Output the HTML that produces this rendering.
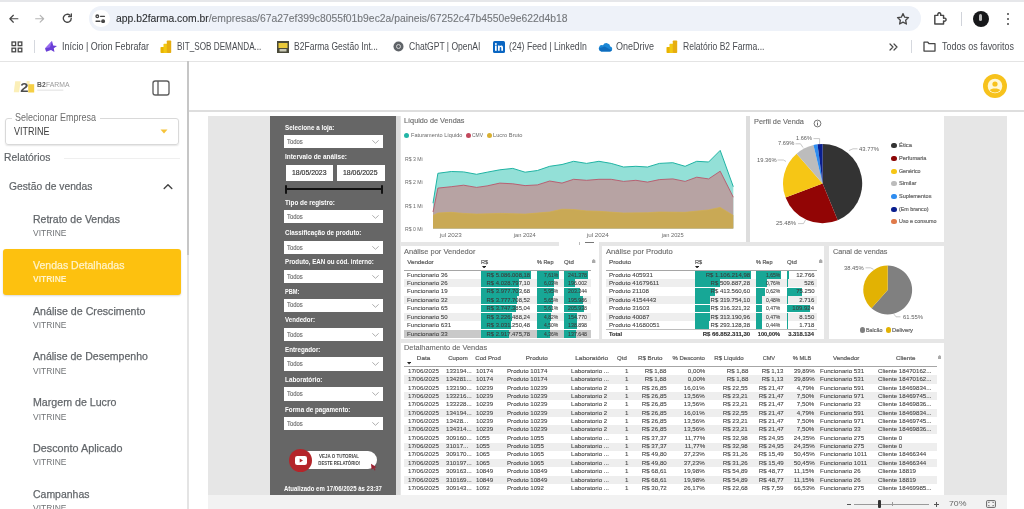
<!DOCTYPE html>
<html><head><meta charset="utf-8">
<style>
*{box-sizing:border-box;margin:0;padding:0}
html,body{width:1024px;height:509px;overflow:hidden;background:#fff;font-family:"Liberation Sans",sans-serif;}
.a{position:absolute;white-space:nowrap;line-height:1}
#root{position:absolute;left:0;top:0;width:1024px;height:509px;overflow:hidden;background:#fff}
#root>*{filter:blur(.45px)}
</style></head><body><div id="root">
<!-- chrome -->
<div class="a" style="left:0.00px;top:-1.00px;width:1024.00px;height:2.60px;background:#e6e7ea;"></div>
<div class="a" style="left:89.00px;top:6.30px;width:832.00px;height:24.40px;background:#eef2f9;border-radius:12.2px;"></div>

<svg class="a" style="left:8.2px;top:13.1px" width="11.5" height="11.5" viewBox="0 0 14 14" fill="none" stroke="#474747" stroke-width="1.5" stroke-linecap="round" stroke-linejoin="round"><path d="M12 7H2.5M6.5 2.8L2.3 7l4.2 4.2"/></svg>
<svg class="a" style="left:34.3px;top:13.1px" width="11.5" height="11.5" viewBox="0 0 14 14" fill="none" stroke="#b5b5b5" stroke-width="1.4" stroke-linecap="round" stroke-linejoin="round"><path d="M2 7h9.5M7.5 2.8L11.7 7l-4.2 4.2"/></svg>
<svg class="a" style="left:61.3px;top:12.4px" width="12.6" height="12.6" viewBox="0 0 15 15" fill="none" stroke="#474747" stroke-width="1.6" stroke-linecap="round" stroke-linejoin="round"><path d="M12.2 7.6a4.7 4.7 0 1 1-1.5-3.6"/><path d="M12.3 2.3v3.3H9" /></svg>
<div class="a" style="left:92px;top:9.6px;width:17.6px;height:17.8px;border-radius:9px;background:#fff"></div>
<svg class="a" style="left:95.3px;top:13.8px" width="10.6" height="9.7" viewBox="0 0 12 11" fill="none" stroke="#474747" stroke-width="1.5" stroke-linecap="round"><circle cx="2.6" cy="2.6" r="1.5"/><path d="M6.3 2.6h4.4"/><circle cx="9.2" cy="8.2" r="1.5" fill="#474747"/><path d="M1.2 8.2h4.4"/></svg>

<div class="a" style="top:13.26px;font-size:11.40px;color:#74777b;left:115.60px;transform:scaleX(0.9096);transform-origin:0 0;-webkit-text-stroke:.12px #74777b;"><span style="color:#2e3033;-webkit-text-stroke:.12px #2e3033">app.b2farma.com.br</span>/empresas/67a27ef399c8055f01b9ec2a/paineis/67252c47b4550e9e622d4b18</div>

<svg class="a" style="left:896px;top:12px" width="14" height="14" viewBox="0 0 14 14" fill="none" stroke="#474747" stroke-width="1.3" stroke-linejoin="round"><path d="M7 1.6l1.65 3.55 3.85.45-2.85 2.65.75 3.8L7 10.15 3.6 12.05l.75-3.8L1.5 5.6l3.85-.45z"/></svg>
<svg class="a" style="left:933px;top:11px" width="15" height="15" viewBox="0 0 15 15" fill="none" stroke="#474747" stroke-width="1.5" stroke-linejoin="round"><path d="M2.5 4.3h3.2c-.5-1.6.3-2.6 1.4-2.6s1.9 1 1.4 2.6h3v3c1.6-.5 2.6.3 2.6 1.4s-1 1.9-2.6 1.4v3.2h-9z" transform="translate(-0.6,0.2) scale(0.97)"/></svg>
<div class="a" style="left:960.5px;top:12px;width:1px;height:14px;background:#d0d3da"></div>
<div class="a" style="left:972.5px;top:11px;width:16px;height:16px;border-radius:8px;background:#17181a"></div>
<div class="a" style="left:979px;top:14px;width:3px;height:7px;border-radius:1.5px;background:#d8d8d8;opacity:.85"></div>
<div class="a" style="left:1006.5px;top:12.5px;width:2.6px;height:2.6px;border-radius:2px;background:#474747"></div>
<div class="a" style="left:1006.5px;top:17.7px;width:2.6px;height:2.6px;border-radius:2px;background:#474747"></div>
<div class="a" style="left:1006.5px;top:22.9px;width:2.6px;height:2.6px;border-radius:2px;background:#474747"></div>
<svg class="a" style="left:11px;top:41px" width="12" height="12" viewBox="0 0 12 12" fill="none" stroke="#474747" stroke-width="1.3"><rect x="1" y="1" width="3.6" height="3.6"/><rect x="7.2" y="1" width="3.6" height="3.6"/><rect x="1" y="7.2" width="3.6" height="3.6"/><rect x="7.2" y="7.2" width="3.6" height="3.6"/></svg>
<div class="a" style="left:33.5px;top:40px;width:1px;height:13px;background:#d5d8de"></div>
<svg class="a" style="left:44px;top:40px" width="14" height="13" viewBox="0 0 14 13"><path d="M1 8.5L8 1l1.2 4.4L13 6l-3.2 2.3.6 3.7L7 10l-4.8 1.8z" fill="#6a3fd6"/><path d="M1 8.5l5-1.2L8 1z" fill="#9b6df0"/></svg>
<svg class="a" style="left:160px;top:40px" width="12" height="13" viewBox="0 0 12 13"><rect x="0.5" y="7" width="4" height="6" rx=".8" fill="#e9b400"/><rect x="3.5" y="3.8" width="4" height="9.2" rx=".8" fill="#f2c811"/><rect x="6.8" y="0.5" width="4.4" height="12.5" rx=".8" fill="#e6ad10"/></svg>
<svg class="a" style="left:276.5px;top:40.5px" width="12" height="12" viewBox="0 0 12 12"><rect width="12" height="12" fill="#4a4a3a"/><rect x="1.5" y="2" width="9" height="5" fill="#e9c93a"/><rect x="2.5" y="8" width="7" height="2.5" fill="#c9c9b5"/></svg>
<svg class="a" style="left:392.5px;top:41px" width="11" height="11" viewBox="0 0 11 11"><circle cx="5.5" cy="5.5" r="5" fill="#5f6368"/><circle cx="5.5" cy="5.5" r="2" fill="none" stroke="#ddd" stroke-width=".9"/></svg>
<svg class="a" style="left:492.5px;top:40.5px" width="12" height="12" viewBox="0 0 12 12"><rect width="12" height="12" rx="1.5" fill="#0a66c2"/><rect x="2" y="4.6" width="1.7" height="5.2" fill="#fff"/><circle cx="2.85" cy="2.9" r="1" fill="#fff"/><path d="M5 4.6h1.6v.8c.9-1.4 3.4-1.2 3.4 1v3.4H8.3V6.9c0-1.2-1.6-1.1-1.6 0v2.9H5z" fill="#fff"/></svg>
<svg class="a" style="left:598px;top:42px" width="15" height="10" viewBox="0 0 15 10"><path d="M3.2 9.5h8.6a2.6 2.6 0 0 0 .5-5.1A3.9 3.9 0 0 0 5 3.2 3.2 3.2 0 0 0 3.2 9.5z" fill="#1b87d6"/><path d="M3.2 9.5h8.6a2.6 2.6 0 0 0 2-1L6.8 4.4 1.4 6.2A3.2 3.2 0 0 0 3.2 9.5z" fill="#0f6cbd"/></svg>
<svg class="a" style="left:666px;top:40px" width="12" height="13" viewBox="0 0 12 13"><rect x="0.5" y="7" width="4" height="6" rx=".8" fill="#e9b400"/><rect x="3.5" y="3.8" width="4" height="9.2" rx=".8" fill="#f2c811"/><rect x="6.8" y="0.5" width="4.4" height="12.5" rx=".8" fill="#e6ad10"/></svg>
<svg class="a" style="left:889px;top:43px" width="9" height="8" viewBox="0 0 9 8" fill="none" stroke="#474747" stroke-width="1.2" stroke-linecap="round" stroke-linejoin="round"><path d="M1 1l3 3-3 3M5 1l3 3-3 3"/></svg>
<div class="a" style="left:911px;top:40px;width:1px;height:13px;background:#d5d8de"></div>
<svg class="a" style="left:923px;top:41px" width="13" height="11" viewBox="0 0 13 11" fill="none" stroke="#474747" stroke-width="1.3" stroke-linejoin="round"><path d="M1 1.2h3.8l1.3 1.5H12v7.4H1z"/></svg>

<div class="a" style="top:41.99px;font-size:10.20px;color:#4a4d52;left:61.50px;transform:scaleX(0.8786);transform-origin:0 0;">Início | Orion Febrafar</div>
<div class="a" style="top:41.99px;font-size:10.20px;color:#4a4d52;left:177.00px;transform:scaleX(0.8015);transform-origin:0 0;">BIT_SOB DEMANDA...</div>
<div class="a" style="top:41.99px;font-size:10.20px;color:#4a4d52;left:293.50px;transform:scaleX(0.8371);transform-origin:0 0;">B2Farma Gestão Int...</div>
<div class="a" style="top:41.99px;font-size:10.20px;color:#4a4d52;left:408.50px;transform:scaleX(0.8388);transform-origin:0 0;">ChatGPT | OpenAI</div>
<div class="a" style="top:41.99px;font-size:10.20px;color:#4a4d52;left:509.00px;transform:scaleX(0.8562);transform-origin:0 0;">(24) Feed | LinkedIn</div>
<div class="a" style="top:41.99px;font-size:10.20px;color:#4a4d52;left:616.00px;transform:scaleX(0.8820);transform-origin:0 0;">OneDrive</div>
<div class="a" style="top:41.99px;font-size:10.20px;color:#4a4d52;left:682.50px;transform:scaleX(0.8407);transform-origin:0 0;">Relatório B2 Farma...</div>
<div class="a" style="top:41.99px;font-size:10.20px;color:#4a4d52;left:942.00px;transform:scaleX(0.8758);transform-origin:0 0;">Todos os favoritos</div>
<div class="a" style="left:0.00px;top:60.50px;width:1024.00px;height:1.00px;background:#e4e4e4;"></div>
<!-- sidebar -->

<svg class="a" style="left:13px;top:78px" width="60" height="17" viewBox="0 0 60 17">
<path d="M2.2 3.2h5.5l-1.6 11H0.8z" fill="#fbefb8"/>
<rect x="15.2" y="6.2" width="6" height="8.3" fill="#f5cf45"/>
<rect x="13.6" y="3" width="3" height="3" fill="#fbefb8"/>
<text x="7.3" y="14.2" font-family="Liberation Sans" font-weight="bold" font-size="13.5" fill="#4e4e4e" textLength="8.2" lengthAdjust="spacingAndGlyphs">2</text>
<text x="24.1" y="9.4" font-family="Liberation Sans" font-weight="bold" font-size="6.6" fill="#5a5a5a" textLength="8.6" lengthAdjust="spacingAndGlyphs">B2</text>
<text x="33" y="9.4" font-family="Liberation Sans" font-size="6.6" fill="#9a9a9a" textLength="23.5" lengthAdjust="spacingAndGlyphs">FARMA</text>
<rect x="24.3" y="11.6" width="26" height="1.1" fill="#e3e3e3"/>
</svg>
<svg class="a" style="left:151.8px;top:80.2px" width="18" height="16" viewBox="0 0 18 16" fill="none" stroke="#5e5e5e" stroke-width="1.35"><rect x="1" y="1" width="16" height="14" rx="2.2"/><path d="M6 1v14"/></svg>

<div class="a" style="left:5px;top:117.8px;width:173.5px;height:26.8px;border:1px solid #d9d9d9;border-radius:3px;box-shadow:0 1px 1.5px rgba(0,0,0,.10)"></div>
<div class="a" style="left:11.50px;top:116.00px;width:88.00px;height:5.00px;background:#fff;"></div>
<div class="a" style="top:113.04px;font-size:10.30px;color:#6e6e6e;left:15.30px;transform:scaleX(0.8733);transform-origin:0 0;">Selecionar Empresa</div>
<div class="a" style="top:126.54px;font-size:10.30px;color:#3c3c3c;left:13.50px;transform:scaleX(0.8737);transform-origin:0 0;">VITRINE</div>
<svg class="a" style="left:159.5px;top:129px" width="8" height="5" viewBox="0 0 8 5"><path d="M0.5 0.5h7L4 4.5z" fill="#f6c33a"/></svg>
<div class="a" style="top:151.45px;font-size:11.60px;color:#62666a;left:3.50px;transform:scaleX(0.8904);transform-origin:0 0;-webkit-text-stroke:.2px #595d61;">Relatórios</div>
<div class="a" style="left:64.00px;top:157.50px;width:115.50px;height:1.20px;background:#efefef;"></div>
<div class="a" style="top:180.05px;font-size:11.60px;color:#62666a;left:9.00px;transform:scaleX(0.8868);transform-origin:0 0;-webkit-text-stroke:.2px #595d61;">Gestão de vendas</div>
<svg class="a" style="left:162.5px;top:183px" width="10" height="7" viewBox="0 0 10 7" fill="none" stroke="#444" stroke-width="1.4" stroke-linecap="round" stroke-linejoin="round"><path d="M1.2 5.5L5 1.7l3.8 3.8"/></svg>
<div class="a" style="left:3.00px;top:249.00px;width:177.50px;height:46.00px;background:#fdc10f;border-radius:3px;box-shadow:0 1px 2px rgba(0,0,0,.15);"></div>
<div class="a" style="top:213.00px;font-size:11.70px;color:#62666a;left:33.20px;transform:scaleX(0.8976);transform-origin:0 0;-webkit-text-stroke:.25px #62666a;">Retrato de Vendas</div>
<div class="a" style="top:229.47px;font-size:9.30px;color:#707376;left:33.20px;transform:scaleX(0.9131);transform-origin:0 0;">VITRINE</div>
<div class="a" style="top:258.80px;font-size:11.70px;color:#fff3c9;left:33.20px;transform:scaleX(0.9016);transform-origin:0 0;-webkit-text-stroke:.25px #fff3c9;">Vendas Detalhadas</div>
<div class="a" style="top:275.27px;font-size:9.30px;color:#fff3c9;font-weight:bold;left:33.20px;transform:scaleX(0.9131);transform-origin:0 0;">VITRINE</div>
<div class="a" style="top:304.60px;font-size:11.70px;color:#62666a;left:33.20px;transform:scaleX(0.9105);transform-origin:0 0;-webkit-text-stroke:.25px #62666a;">Análise de Crescimento</div>
<div class="a" style="top:321.07px;font-size:9.30px;color:#707376;left:33.20px;transform:scaleX(0.9131);transform-origin:0 0;">VITRINE</div>
<div class="a" style="top:350.40px;font-size:11.70px;color:#62666a;left:33.20px;transform:scaleX(0.9021);transform-origin:0 0;-webkit-text-stroke:.25px #62666a;">Análise de Desempenho</div>
<div class="a" style="top:366.87px;font-size:9.30px;color:#707376;left:33.20px;transform:scaleX(0.9131);transform-origin:0 0;">VITRINE</div>
<div class="a" style="top:396.20px;font-size:11.70px;color:#62666a;left:33.20px;transform:scaleX(0.9106);transform-origin:0 0;-webkit-text-stroke:.25px #62666a;">Margem de Lucro</div>
<div class="a" style="top:412.67px;font-size:9.30px;color:#707376;left:33.20px;transform:scaleX(0.9131);transform-origin:0 0;">VITRINE</div>
<div class="a" style="top:442.00px;font-size:11.70px;color:#62666a;left:33.20px;transform:scaleX(0.9235);transform-origin:0 0;-webkit-text-stroke:.25px #62666a;">Desconto Aplicado</div>
<div class="a" style="top:458.47px;font-size:9.30px;color:#707376;left:33.20px;transform:scaleX(0.9131);transform-origin:0 0;">VITRINE</div>
<div class="a" style="top:487.80px;font-size:11.70px;color:#62666a;left:33.20px;transform:scaleX(0.8956);transform-origin:0 0;-webkit-text-stroke:.25px #62666a;">Campanhas</div>
<div class="a" style="top:504.27px;font-size:9.30px;color:#707376;left:33.20px;transform:scaleX(0.9131);transform-origin:0 0;">VITRINE</div>
<div class="a" style="left:186.60px;top:61.00px;width:2.80px;height:448.00px;background:#e4e4e4;"></div>
<div class="a" style="left:186.60px;top:61.00px;width:2.80px;height:194.00px;background:#c6c6c6;"></div>
<!-- mainarea -->
<div class="a" style="left:189.40px;top:109.50px;width:835.00px;height:2.50px;background:#dedede;"></div>
<div class="a" style="left:207.50px;top:116.00px;width:799.00px;height:379.00px;background:#e6e6e6;"></div>
<div class="a" style="left:207.50px;top:495.00px;width:799.00px;height:14.00px;background:#f2f2f2;"></div>
<div class="a" style="left:982.5px;top:74px;width:24px;height:24px;border-radius:12px;background:#f7c21c"></div>
<svg class="a" style="left:985.5px;top:77px" width="18" height="18" viewBox="0 0 18 18"><circle cx="9" cy="9" r="7.3" fill="#fff7d6"/><circle cx="9" cy="7" r="2.6" fill="#f7c21c"/><path d="M3.8 13.2c1-2.4 9.4-2.4 10.4 0a7 7 0 0 1-10.4 0z" fill="#f7c21c"/></svg>
<!-- filters -->
<div class="a" style="left:270.00px;top:116.00px;width:126.30px;height:378.50px;background:#666666;"></div>
<div class="a" style="left:396.30px;top:116.00px;width:4.20px;height:378.50px;background:#dcdcdc;"></div>
<div class="a" style="top:124.94px;font-size:6.90px;color:#ffffff;font-weight:bold;left:285.20px;transform:scaleX(0.9154);transform-origin:0 0;">Selecione a loja:</div>
<div class="a" style="left:284.00px;top:135.00px;width:99.30px;height:13.30px;background:#fff;"></div>
<div class="a" style="top:139.01px;font-size:6.30px;color:#707070;left:287.30px;transform:scaleX(0.9398);transform-origin:0 0;-webkit-text-stroke:.15px #707070;">Todos</div>
<svg class="a" style="left:372.00px;top:140.05px" width="7" height="4" viewBox="0 0 7 4" fill="none" stroke="#9a9a9a" stroke-width=".8" stroke-linecap="round" stroke-linejoin="round"><path d="M.6 .6L3.5 3.3 6.4 .6"/></svg>
<div class="a" style="top:154.44px;font-size:6.90px;color:#ffffff;font-weight:bold;left:285.20px;transform:scaleX(0.9345);transform-origin:0 0;">Intervalo de análise:</div>
<div class="a" style="left:286.00px;top:164.50px;width:47.20px;height:16.70px;background:#fff;"></div>
<div class="a" style="left:336.50px;top:164.50px;width:48.00px;height:16.70px;background:#fff;"></div>
<div class="a" style="top:169.33px;font-size:7.30px;color:#3a3a3a;left:291.33px;transform:scaleX(0.9443);transform-origin:50% 0;-webkit-text-stroke:.2px #3a3a3a;">18/05/2023</div>
<div class="a" style="top:169.33px;font-size:7.30px;color:#3a3a3a;left:342.23px;transform:scaleX(0.9443);transform-origin:50% 0;-webkit-text-stroke:.2px #3a3a3a;">18/06/2025</div>
<div class="a" style="left:285.60px;top:188.10px;width:96.40px;height:1.70px;background:#111;"></div>
<div class="a" style="left:285.00px;top:184.60px;width:2.20px;height:9.00px;background:#111;border-radius:1px;"></div>
<div class="a" style="left:380.60px;top:184.60px;width:2.20px;height:9.00px;background:#111;border-radius:1px;"></div>
<div class="a" style="top:199.94px;font-size:6.90px;color:#ffffff;font-weight:bold;left:285.20px;transform:scaleX(0.9206);transform-origin:0 0;">Tipo de registro:</div>
<div class="a" style="left:284.00px;top:210.00px;width:99.30px;height:13.30px;background:#fff;"></div>
<div class="a" style="top:214.01px;font-size:6.30px;color:#707070;left:287.30px;transform:scaleX(0.9398);transform-origin:0 0;-webkit-text-stroke:.15px #707070;">Todos</div>
<svg class="a" style="left:372.00px;top:215.05px" width="7" height="4" viewBox="0 0 7 4" fill="none" stroke="#9a9a9a" stroke-width=".8" stroke-linecap="round" stroke-linejoin="round"><path d="M.6 .6L3.5 3.3 6.4 .6"/></svg>
<div class="a" style="top:230.14px;font-size:6.90px;color:#ffffff;font-weight:bold;left:285.20px;transform:scaleX(0.9069);transform-origin:0 0;">Classificação de produto:</div>
<div class="a" style="left:284.00px;top:240.70px;width:99.30px;height:12.90px;background:#fff;"></div>
<div class="a" style="top:244.51px;font-size:6.30px;color:#707070;left:287.30px;transform:scaleX(0.9398);transform-origin:0 0;-webkit-text-stroke:.15px #707070;">Todos</div>
<svg class="a" style="left:372.00px;top:245.55px" width="7" height="4" viewBox="0 0 7 4" fill="none" stroke="#9a9a9a" stroke-width=".8" stroke-linecap="round" stroke-linejoin="round"><path d="M.6 .6L3.5 3.3 6.4 .6"/></svg>
<div class="a" style="top:258.94px;font-size:6.90px;color:#ffffff;font-weight:bold;left:285.20px;transform:scaleX(0.9000);transform-origin:0 0;">Produto, EAN ou cód. interno:</div>
<div class="a" style="left:284.00px;top:269.60px;width:99.30px;height:13.20px;background:#fff;"></div>
<div class="a" style="top:273.56px;font-size:6.30px;color:#707070;left:287.30px;transform:scaleX(0.9398);transform-origin:0 0;-webkit-text-stroke:.15px #707070;">Todos</div>
<svg class="a" style="left:372.00px;top:274.60px" width="7" height="4" viewBox="0 0 7 4" fill="none" stroke="#9a9a9a" stroke-width=".8" stroke-linecap="round" stroke-linejoin="round"><path d="M.6 .6L3.5 3.3 6.4 .6"/></svg>
<div class="a" style="top:288.54px;font-size:6.90px;color:#ffffff;font-weight:bold;left:285.20px;transform:scaleX(0.8224);transform-origin:0 0;">PBM:</div>
<div class="a" style="left:284.00px;top:298.60px;width:99.30px;height:13.00px;background:#fff;"></div>
<div class="a" style="top:302.46px;font-size:6.30px;color:#707070;left:287.30px;transform:scaleX(0.9398);transform-origin:0 0;-webkit-text-stroke:.15px #707070;">Todos</div>
<svg class="a" style="left:372.00px;top:303.50px" width="7" height="4" viewBox="0 0 7 4" fill="none" stroke="#9a9a9a" stroke-width=".8" stroke-linecap="round" stroke-linejoin="round"><path d="M.6 .6L3.5 3.3 6.4 .6"/></svg>
<div class="a" style="top:317.14px;font-size:6.90px;color:#ffffff;font-weight:bold;left:285.20px;transform:scaleX(0.8892);transform-origin:0 0;">Vendedor:</div>
<div class="a" style="left:284.00px;top:328.00px;width:99.30px;height:13.10px;background:#fff;"></div>
<div class="a" style="top:331.91px;font-size:6.30px;color:#707070;left:287.30px;transform:scaleX(0.9398);transform-origin:0 0;-webkit-text-stroke:.15px #707070;">Todos</div>
<svg class="a" style="left:372.00px;top:332.95px" width="7" height="4" viewBox="0 0 7 4" fill="none" stroke="#9a9a9a" stroke-width=".8" stroke-linecap="round" stroke-linejoin="round"><path d="M.6 .6L3.5 3.3 6.4 .6"/></svg>
<div class="a" style="top:346.74px;font-size:6.90px;color:#ffffff;font-weight:bold;left:285.20px;transform:scaleX(0.9078);transform-origin:0 0;">Entregador:</div>
<div class="a" style="left:284.00px;top:357.40px;width:99.30px;height:13.20px;background:#fff;"></div>
<div class="a" style="top:361.36px;font-size:6.30px;color:#707070;left:287.30px;transform:scaleX(0.9398);transform-origin:0 0;-webkit-text-stroke:.15px #707070;">Todos</div>
<svg class="a" style="left:372.00px;top:362.40px" width="7" height="4" viewBox="0 0 7 4" fill="none" stroke="#9a9a9a" stroke-width=".8" stroke-linecap="round" stroke-linejoin="round"><path d="M.6 .6L3.5 3.3 6.4 .6"/></svg>
<div class="a" style="top:376.74px;font-size:6.90px;color:#ffffff;font-weight:bold;left:285.20px;transform:scaleX(0.9229);transform-origin:0 0;">Laboratório:</div>
<div class="a" style="left:284.00px;top:387.40px;width:99.30px;height:13.20px;background:#fff;"></div>
<div class="a" style="top:391.36px;font-size:6.30px;color:#707070;left:287.30px;transform:scaleX(0.9398);transform-origin:0 0;-webkit-text-stroke:.15px #707070;">Todos</div>
<svg class="a" style="left:372.00px;top:392.40px" width="7" height="4" viewBox="0 0 7 4" fill="none" stroke="#9a9a9a" stroke-width=".8" stroke-linecap="round" stroke-linejoin="round"><path d="M.6 .6L3.5 3.3 6.4 .6"/></svg>
<div class="a" style="top:406.54px;font-size:6.90px;color:#ffffff;font-weight:bold;left:285.20px;transform:scaleX(0.9087);transform-origin:0 0;">Forma de pagamento:</div>
<div class="a" style="left:284.00px;top:416.90px;width:99.30px;height:13.00px;background:#fff;"></div>
<div class="a" style="top:420.76px;font-size:6.30px;color:#707070;left:287.30px;transform:scaleX(0.9398);transform-origin:0 0;-webkit-text-stroke:.15px #707070;">Todos</div>
<svg class="a" style="left:372.00px;top:421.80px" width="7" height="4" viewBox="0 0 7 4" fill="none" stroke="#9a9a9a" stroke-width=".8" stroke-linecap="round" stroke-linejoin="round"><path d="M.6 .6L3.5 3.3 6.4 .6"/></svg>
<div class="a" style="left:300.00px;top:451.30px;width:77.00px;height:17.50px;background:#fff;border-radius:9px;"></div>
<div class="a" style="left:288.7px;top:448.7px;width:23px;height:23px;border-radius:12px;background:#b4252a"></div>
<svg class="a" style="left:294.5px;top:456px" width="12" height="9" viewBox="0 0 12 9"><rect width="12" height="9" rx="2.2" fill="#fff"/><path d="M4.7 2.4L8 4.5 4.7 6.6z" fill="#b4252a"/></svg>
<div class="a" style="top:453.63px;font-size:5.60px;color:#444;font-weight:bold;left:314.25px;transform:scaleX(0.7985);transform-origin:50% 0;">VEJA O TUTORIAL</div>
<div class="a" style="top:460.93px;font-size:5.60px;color:#444;font-weight:bold;left:311.97px;transform:scaleX(0.7685);transform-origin:50% 0;">DESTE RELATÓRIO!</div>
<svg class="a" style="left:370px;top:463px" width="8" height="8" viewBox="0 0 8 8"><path d="M1 .8l5.6 3.4-2.4.5 1.4 2.4-1 .5L3.3 5.2 1.6 6.8z" fill="#9c2030"/></svg>
<div class="a" style="top:485.86px;font-size:6.30px;color:#fff;font-weight:bold;left:283.80px;transform:scaleX(0.9551);transform-origin:0 0;">Atualizado em 17/06/2025 às 23:37</div>
<!-- chart -->
<div class="a" style="left:400.50px;top:113.00px;width:345.50px;height:129.30px;background:#fff;"></div>
<div class="a" style="left:746.00px;top:116.00px;width:4.50px;height:126.30px;background:#dddddd;"></div>
<div class="a" style="top:117.12px;font-size:7.70px;color:#6a6a6a;left:403.80px;transform:scaleX(0.9483);transform-origin:0 0;-webkit-text-stroke:.12px #6a6a6a;">Líquido de Vendas</div>
<div class="a" style="left:404.10px;top:132.80px;width:5px;height:5px;border-radius:3px;background:#22b5a6"></div>
<div class="a" style="top:133.14px;font-size:5.40px;color:#6a6a6a;left:410.70px;transform:scaleX(1.0335);transform-origin:0 0;">Faturamento Líquido</div>
<div class="a" style="left:465.70px;top:132.80px;width:5px;height:5px;border-radius:3px;background:#c2485c"></div>
<div class="a" style="top:133.14px;font-size:5.40px;color:#6a6a6a;left:472.00px;transform:scaleX(0.9166);transform-origin:0 0;">CMV</div>
<div class="a" style="left:486.70px;top:132.80px;width:5px;height:5px;border-radius:3px;background:#d8b032"></div>
<div class="a" style="top:133.14px;font-size:5.40px;color:#6a6a6a;left:493.00px;transform:scaleX(1.0567);transform-origin:0 0;">Lucro Bruto</div>
<div class="a" style="top:156.54px;font-size:5.20px;color:#6a6a6a;left:404.60px;transform:scaleX(0.9935);transform-origin:0 0;">R$ 3 Mi</div>
<div class="a" style="top:179.94px;font-size:5.20px;color:#6a6a6a;left:404.60px;transform:scaleX(0.9935);transform-origin:0 0;">R$ 2 Mi</div>
<div class="a" style="top:203.54px;font-size:5.20px;color:#6a6a6a;left:404.60px;transform:scaleX(0.9935);transform-origin:0 0;">R$ 1 Mi</div>
<div class="a" style="top:227.14px;font-size:5.20px;color:#6a6a6a;left:404.60px;transform:scaleX(0.9935);transform-origin:0 0;">R$ 0 Mi</div>
<div class="a" style="top:232.63px;font-size:5.60px;color:#6a6a6a;left:441.19px;transform:scaleX(1.1215);transform-origin:50% 0;">jul 2023</div>
<div class="a" style="top:232.63px;font-size:5.60px;color:#6a6a6a;left:514.26px;transform:scaleX(1.0239);transform-origin:50% 0;">jan 2024</div>
<div class="a" style="top:232.63px;font-size:5.60px;color:#6a6a6a;left:588.49px;transform:scaleX(1.1215);transform-origin:50% 0;">jul 2024</div>
<div class="a" style="top:232.63px;font-size:5.60px;color:#6a6a6a;left:661.86px;transform:scaleX(1.0239);transform-origin:50% 0;">jan 2025</div>
<svg class="a" style="left:0;top:0" width="1024" height="509" viewBox="0 0 1024 509"><path d="M433.0 203.2 L437.9 173.3 L451.3 171.5 L463.6 171.9 L476.6 174.3 L487.1 172.2 L499.8 169.8 L512.8 168.4 L525.1 172.2 L537.4 170.5 L549.7 166.3 L562.0 164.5 L573.6 161.3 L586.6 163.4 L598.9 161.3 L611.2 163.4 L623.6 167.0 L635.9 166.3 L647.5 167.0 L659.4 163.4 L672.8 162.7 L685.1 166.3 L696.7 161.3 L708.6 162.0 L720.2 150.4 L733.3 186.7 L733.3 228.5 L433.0 228.5 Z" fill="#93e0d7"/><path d="M433.0 212.0 L437.9 188.1 L451.3 186.7 L463.6 185.2 L476.6 187.4 L487.1 185.9 L499.8 183.1 L512.8 183.8 L525.1 185.6 L537.4 184.9 L549.7 181.0 L562.0 183.1 L573.6 179.3 L586.6 180.3 L598.9 179.3 L611.2 179.3 L623.6 181.4 L635.9 180.3 L647.5 182.1 L659.4 179.6 L672.8 178.9 L685.1 181.4 L696.7 177.2 L708.6 178.9 L720.2 171.2 L733.3 197.2 L733.3 228.5 L433.0 228.5 Z" fill="#b7a3a3"/><path d="M433.0 215.5 L437.9 213.0 L451.3 212.3 L463.6 213.4 L476.6 214.1 L499.8 213.4 L525.1 214.1 L549.7 212.0 L562.0 209.2 L573.6 209.5 L586.6 210.9 L598.9 211.3 L623.6 213.0 L647.5 212.7 L659.4 212.0 L685.1 212.3 L708.6 209.9 L720.2 207.4 L733.3 215.5 L733.3 228.5 L433.0 228.5 Z" fill="#c9a955"/><path d="M433.0 203.2 L437.9 173.3 L451.3 171.5 L463.6 171.9 L476.6 174.3 L487.1 172.2 L499.8 169.8 L512.8 168.4 L525.1 172.2 L537.4 170.5 L549.7 166.3 L562.0 164.5 L573.6 161.3 L586.6 163.4 L598.9 161.3 L611.2 163.4 L623.6 167.0 L635.9 166.3 L647.5 167.0 L659.4 163.4 L672.8 162.7 L685.1 166.3 L696.7 161.3 L708.6 162.0 L720.2 150.4 L733.3 186.7" fill="none" stroke="#1fb3a3" stroke-width="1" stroke-linejoin="round"/><path d="M433.0 212.0 L437.9 188.1 L451.3 186.7 L463.6 185.2 L476.6 187.4 L487.1 185.9 L499.8 183.1 L512.8 183.8 L525.1 185.6 L537.4 184.9 L549.7 181.0 L562.0 183.1 L573.6 179.3 L586.6 180.3 L598.9 179.3 L611.2 179.3 L623.6 181.4 L635.9 180.3 L647.5 182.1 L659.4 179.6 L672.8 178.9 L685.1 181.4 L696.7 177.2 L708.6 178.9 L720.2 171.2 L733.3 197.2" fill="none" stroke="#b9566a" stroke-width="0.9" stroke-linejoin="round"/><path d="M433.0 215.5 L437.9 213.0 L451.3 212.3 L463.6 213.4 L476.6 214.1 L499.8 213.4 L525.1 214.1 L549.7 212.0 L562.0 209.2 L573.6 209.5 L586.6 210.9 L598.9 211.3 L623.6 213.0 L647.5 212.7 L659.4 212.0 L685.1 212.3 L708.6 209.9 L720.2 207.4 L733.3 215.5" fill="none" stroke="#d4b04a" stroke-width="0.7" stroke-linejoin="round"/></svg>
<div class="a" style="left:559.00px;top:241.50px;width:40.00px;height:5.00px;background:#fff;"></div>
<div class="a" style="left:585.00px;top:242.20px;width:9.00px;height:1.10px;background:#777;"></div>
<div class="a" style="left:578.80px;top:241.80px;width:0.80px;height:3.00px;background:#bbb;"></div>
<!-- pies -->
<div class="a" style="left:750.30px;top:113.00px;width:193.50px;height:129.00px;background:#fff;"></div>
<div class="a" style="top:117.62px;font-size:7.70px;color:#6a6a6a;left:753.80px;transform:scaleX(0.9573);transform-origin:0 0;-webkit-text-stroke:.12px #6a6a6a;">Perfil de Venda</div>
<svg class="a" style="left:812.5px;top:118.7px" width="9" height="9" viewBox="0 0 9 9"><circle cx="4.5" cy="4.5" r="3.4" fill="none" stroke="#555" stroke-width=".8"/><rect x="4.1" y="3.9" width=".9" height="2.6" fill="#555"/><rect x="4.1" y="2.5" width=".9" height=".9" fill="#555"/></svg>
<svg class="a" style="left:0;top:0" width="1024" height="509" viewBox="0 0 1024 509"><path d="M822.60 183.60 L822.60 144.00 A39.60 39.60 0 0 1 837.71 220.20 Z" fill="#333333"/><path d="M822.60 183.60 L837.71 220.20 A39.60 39.60 0 0 1 785.56 197.60 Z" fill="#920505"/><path d="M822.60 183.60 L785.56 197.60 A39.60 39.60 0 0 1 796.62 153.72 Z" fill="#f6c615"/><path d="M822.60 183.60 L796.62 153.72 A39.60 39.60 0 0 1 813.48 145.07 Z" fill="#bcbcbc"/><path d="M822.60 183.60 L813.48 145.07 A39.60 39.60 0 0 1 817.54 144.32 Z" fill="#2f8df0"/><path d="M822.60 183.60 L817.54 144.32 A39.60 39.60 0 0 1 822.60 144.00 Z" fill="#0a1f8f"/><path d="M849 150.5 L853 148.8 L857.5 148.8" fill="none" stroke="#b0b0b0" stroke-width=".7"/><path d="M813.5 138.6 L819.6 138.6 L819.6 144" fill="none" stroke="#b0b0b0" stroke-width=".7"/><path d="M795.5 143.8 L800.5 143.8 L803 147.5" fill="none" stroke="#b0b0b0" stroke-width=".7"/><path d="M777.5 160 L783.5 160 L786 161.5" fill="none" stroke="#b0b0b0" stroke-width=".7"/><path d="M798 223.6 L803.5 223.6 L805.5 220" fill="none" stroke="#b0b0b0" stroke-width=".7"/></svg>
<div class="a" style="top:146.83px;font-size:5.80px;color:#5e5e5e;left:859.00px;transform:scaleX(1.0167);transform-origin:0 0;">43.77%</div>
<div class="a" style="top:136.43px;font-size:5.80px;color:#5e5e5e;left:796.00px;transform:scaleX(0.9729);transform-origin:0 0;">1.66%</div>
<div class="a" style="top:141.33px;font-size:5.80px;color:#5e5e5e;left:777.60px;transform:scaleX(0.9911);transform-origin:0 0;">7.69%</div>
<div class="a" style="top:158.03px;font-size:5.80px;color:#5e5e5e;left:756.60px;transform:scaleX(0.9913);transform-origin:0 0;">19.36%</div>
<div class="a" style="top:221.43px;font-size:5.80px;color:#5e5e5e;left:776.00px;transform:scaleX(1.0167);transform-origin:0 0;">25.48%</div>
<div class="a" style="left:891.40px;top:143.30px;width:5.2px;height:5.2px;border-radius:3px;background:#333333"></div>
<div class="a" style="top:143.43px;font-size:5.60px;color:#666;left:898.50px;transform:scaleX(1.0442);transform-origin:0 0;-webkit-text-stroke:.2px #666;">Ética</div>
<div class="a" style="left:891.40px;top:155.95px;width:5.2px;height:5.2px;border-radius:3px;background:#8c0606"></div>
<div class="a" style="top:156.08px;font-size:5.60px;color:#666;left:898.50px;transform:scaleX(1.0041);transform-origin:0 0;-webkit-text-stroke:.2px #666;">Perfumaria</div>
<div class="a" style="left:891.40px;top:168.60px;width:5.2px;height:5.2px;border-radius:3px;background:#f6c615"></div>
<div class="a" style="top:168.73px;font-size:5.60px;color:#666;left:898.50px;transform:scaleX(0.9462);transform-origin:0 0;-webkit-text-stroke:.2px #666;">Genérico</div>
<div class="a" style="left:891.40px;top:181.25px;width:5.2px;height:5.2px;border-radius:3px;background:#bcbcbc"></div>
<div class="a" style="top:181.38px;font-size:5.60px;color:#666;left:898.50px;transform:scaleX(1.0226);transform-origin:0 0;-webkit-text-stroke:.2px #666;">Similar</div>
<div class="a" style="left:891.40px;top:193.90px;width:5.2px;height:5.2px;border-radius:3px;background:#2f8df0"></div>
<div class="a" style="top:194.03px;font-size:5.60px;color:#666;left:898.50px;transform:scaleX(0.9943);transform-origin:0 0;-webkit-text-stroke:.2px #666;">Suplementos</div>
<div class="a" style="left:891.40px;top:206.55px;width:5.2px;height:5.2px;border-radius:3px;background:#0a1f8f"></div>
<div class="a" style="top:206.68px;font-size:5.60px;color:#666;left:898.50px;transform:scaleX(0.9575);transform-origin:0 0;-webkit-text-stroke:.2px #666;">(Em branco)</div>
<div class="a" style="left:891.40px;top:219.20px;width:5.2px;height:5.2px;border-radius:3px;background:#e07a4a"></div>
<div class="a" style="top:219.33px;font-size:5.60px;color:#666;left:898.50px;transform:scaleX(0.9638);transform-origin:0 0;-webkit-text-stroke:.2px #666;">Uso e consumo</div>
<div class="a" style="left:829.30px;top:246.00px;width:114.50px;height:93.30px;background:#fff;"></div>
<div class="a" style="top:248.12px;font-size:7.70px;color:#6a6a6a;left:833.40px;transform:scaleX(0.9430);transform-origin:0 0;-webkit-text-stroke:.12px #6a6a6a;">Canal de vendas</div>
<svg class="a" style="left:0;top:0" width="1024" height="509" viewBox="0 0 1024 509"><path d="M887.70 290.00 L887.70 265.60 A24.40 24.40 0 1 1 871.51 308.25 Z" fill="#808080"/><path d="M887.70 290.00 L871.51 308.25 A24.40 24.40 0 0 1 887.70 265.60 Z" fill="#e2b203"/><path d="M865.5 267.8 L870.5 267.8 L873.5 269.3" fill="none" stroke="#b0b0b0" stroke-width=".7"/><path d="M894 314.2 L896 316.8 L900.5 316.8" fill="none" stroke="#b0b0b0" stroke-width=".7"/></svg>
<div class="a" style="top:265.63px;font-size:5.80px;color:#5e5e5e;left:843.70px;transform:scaleX(1.0065);transform-origin:0 0;">38.45%</div>
<div class="a" style="top:314.73px;font-size:5.80px;color:#5e5e5e;left:902.50px;transform:scaleX(1.0167);transform-origin:0 0;">61.55%</div>
<div class="a" style="left:860.2px;top:327.4px;width:5.2px;height:5.2px;border-radius:3px;background:#808080"></div>
<div class="a" style="top:328.03px;font-size:5.60px;color:#666;left:866.30px;transform:scaleX(0.9636);transform-origin:0 0;-webkit-text-stroke:.2px #666;">Balcão</div>
<div class="a" style="left:885.6px;top:327.4px;width:5.2px;height:5.2px;border-radius:3px;background:#e2b203"></div>
<div class="a" style="top:328.03px;font-size:5.60px;color:#666;left:892.00px;transform:scaleX(1.0382);transform-origin:0 0;-webkit-text-stroke:.2px #666;">Delivery</div>
<!-- tables -->
<div class="a" style="left:401.00px;top:246.00px;width:197.60px;height:93.30px;background:#fff;"></div>
<div class="a" style="top:247.72px;font-size:7.70px;color:#6a6a6a;left:404.00px;transform:scaleX(0.9710);transform-origin:0 0;-webkit-text-stroke:.12px #6a6a6a;">Análise por Vendedor</div>
<div class="a" style="top:258.91px;font-size:6.20px;color:#5c5c5c;left:407.20px;-webkit-text-stroke:.22px #5c5c5c;">Vendedor</div>
<div class="a" style="top:258.91px;font-size:6.20px;color:#5c5c5c;left:481.40px;transform:scaleX(0.9084);transform-origin:0 0;-webkit-text-stroke:.22px #5c5c5c;">R$</div>
<div class="a" style="top:258.91px;font-size:6.20px;color:#5c5c5c;left:536.80px;transform:scaleX(0.8867);transform-origin:0 0;-webkit-text-stroke:.22px #5c5c5c;">% Rep</div>
<div class="a" style="top:258.91px;font-size:6.20px;color:#5c5c5c;left:564.30px;transform:scaleX(0.9807);transform-origin:0 0;-webkit-text-stroke:.22px #5c5c5c;">Qtd</div>
<svg class="a" style="left:481.5px;top:265.6px" width="4.2" height="2.6" viewBox="0 0 5 3"><path d="M0 0h5L2.5 3z" fill="#222"/></svg>
<svg class="a" style="left:592.3px;top:259px" width="3.4" height="4" viewBox="0 0 3.4 4"><path d="M0 1.6L1.7 0l1.7 1.6v2.4H0z" fill="#aaa"/></svg>
<div class="a" style="left:404.00px;top:269.70px;width:186.50px;height:1.00px;background:#a6a6a6;"></div>
<div class="a" style="left:481.00px;top:270.84px;width:50.00px;height:7.92px;background:#17a796;"></div>
<div class="a" style="left:536.80px;top:270.84px;width:21.90px;height:7.92px;background:#17a796;"></div>
<div class="a" style="left:564.30px;top:270.84px;width:23.40px;height:7.92px;background:#17a796;"></div>
<div class="a" style="top:271.57px;font-size:6.10px;color:#454545;left:407.20px;transform:scaleX(1.0100);transform-origin:0 0;-webkit-text-stroke:.09px #454545;">Funcionario 36</div>
<div class="a" style="top:271.57px;font-size:6.10px;color:#3a3a3a;left:485.49px;transform:scaleX(0.9643);transform-origin:100% 0;-webkit-text-stroke:.09px #454545;">R$ 5.086.008,18</div>
<div class="a" style="top:271.57px;font-size:6.10px;color:#3a3a3a;left:541.00px;transform:scaleX(0.8210);transform-origin:100% 0;-webkit-text-stroke:.09px #454545;">7,61%</div>
<div class="a" style="top:271.57px;font-size:6.10px;color:#3a3a3a;left:565.25px;transform:scaleX(0.8617);transform-origin:100% 0;-webkit-text-stroke:.09px #454545;">241.378</div>
<div class="a" style="left:404.00px;top:279.01px;width:186.50px;height:8.42px;background:#eeeeee;"></div>
<div class="a" style="left:481.00px;top:279.26px;width:38.00px;height:7.92px;background:#17a796;"></div>
<div class="a" style="left:536.80px;top:279.26px;width:17.20px;height:7.92px;background:#17a796;"></div>
<div class="a" style="left:564.30px;top:279.26px;width:10.70px;height:7.92px;background:#17a796;"></div>
<div class="a" style="top:279.99px;font-size:6.10px;color:#454545;left:407.20px;transform:scaleX(1.0100);transform-origin:0 0;-webkit-text-stroke:.09px #454545;">Funcionario 26</div>
<div class="a" style="top:279.99px;font-size:6.10px;color:#3a3a3a;left:485.49px;transform:scaleX(0.9643);transform-origin:100% 0;-webkit-text-stroke:.09px #454545;">R$ 4.028.797,10</div>
<div class="a" style="top:279.99px;font-size:6.10px;color:#3a3a3a;left:541.00px;transform:scaleX(0.8210);transform-origin:100% 0;-webkit-text-stroke:.09px #454545;">6,03%</div>
<div class="a" style="top:279.99px;font-size:6.10px;color:#3a3a3a;left:565.25px;transform:scaleX(0.8617);transform-origin:100% 0;-webkit-text-stroke:.09px #454545;">196.002</div>
<div class="a" style="left:481.00px;top:287.68px;width:37.50px;height:7.92px;background:#17a796;"></div>
<div class="a" style="left:536.80px;top:287.68px;width:16.80px;height:7.92px;background:#17a796;"></div>
<div class="a" style="left:564.30px;top:287.68px;width:15.40px;height:7.92px;background:#17a796;"></div>
<div class="a" style="top:288.41px;font-size:6.10px;color:#454545;left:407.20px;transform:scaleX(1.0100);transform-origin:0 0;-webkit-text-stroke:.09px #454545;">Funcionario 19</div>
<div class="a" style="top:288.41px;font-size:6.10px;color:#3a3a3a;left:485.49px;transform:scaleX(0.9643);transform-origin:100% 0;-webkit-text-stroke:.09px #454545;">R$ 3.977.703,68</div>
<div class="a" style="top:288.41px;font-size:6.10px;color:#3a3a3a;left:541.00px;transform:scaleX(0.8210);transform-origin:100% 0;-webkit-text-stroke:.09px #454545;">5,95%</div>
<div class="a" style="top:288.41px;font-size:6.10px;color:#3a3a3a;left:565.25px;transform:scaleX(0.8617);transform-origin:100% 0;-webkit-text-stroke:.09px #454545;">203.344</div>
<div class="a" style="left:404.00px;top:295.85px;width:186.50px;height:8.42px;background:#eeeeee;"></div>
<div class="a" style="left:481.00px;top:296.10px;width:36.40px;height:7.92px;background:#17a796;"></div>
<div class="a" style="left:536.80px;top:296.10px;width:16.20px;height:7.92px;background:#17a796;"></div>
<div class="a" style="left:564.30px;top:296.10px;width:19.10px;height:7.92px;background:#17a796;"></div>
<div class="a" style="top:296.83px;font-size:6.10px;color:#454545;left:407.20px;transform:scaleX(1.0100);transform-origin:0 0;-webkit-text-stroke:.09px #454545;">Funcionario 32</div>
<div class="a" style="top:296.83px;font-size:6.10px;color:#3a3a3a;left:485.49px;transform:scaleX(0.9643);transform-origin:100% 0;-webkit-text-stroke:.09px #454545;">R$ 3.777.708,52</div>
<div class="a" style="top:296.83px;font-size:6.10px;color:#3a3a3a;left:541.00px;transform:scaleX(0.8210);transform-origin:100% 0;-webkit-text-stroke:.09px #454545;">5,65%</div>
<div class="a" style="top:296.83px;font-size:6.10px;color:#3a3a3a;left:565.25px;transform:scaleX(0.8617);transform-origin:100% 0;-webkit-text-stroke:.09px #454545;">195.986</div>
<div class="a" style="left:481.00px;top:304.52px;width:35.40px;height:7.92px;background:#17a796;"></div>
<div class="a" style="left:536.80px;top:304.52px;width:15.70px;height:7.92px;background:#17a796;"></div>
<div class="a" style="left:564.30px;top:304.52px;width:19.70px;height:7.92px;background:#17a796;"></div>
<div class="a" style="top:305.25px;font-size:6.10px;color:#454545;left:407.20px;transform:scaleX(1.0100);transform-origin:0 0;-webkit-text-stroke:.09px #454545;">Funcionario 65</div>
<div class="a" style="top:305.25px;font-size:6.10px;color:#3a3a3a;left:485.49px;transform:scaleX(0.9643);transform-origin:100% 0;-webkit-text-stroke:.09px #454545;">R$ 3.747.385,04</div>
<div class="a" style="top:305.25px;font-size:6.10px;color:#3a3a3a;left:541.00px;transform:scaleX(0.8210);transform-origin:100% 0;-webkit-text-stroke:.09px #454545;">5,61%</div>
<div class="a" style="top:305.25px;font-size:6.10px;color:#3a3a3a;left:565.25px;transform:scaleX(0.8617);transform-origin:100% 0;-webkit-text-stroke:.09px #454545;">205.938</div>
<div class="a" style="left:404.00px;top:312.69px;width:186.50px;height:8.42px;background:#eeeeee;"></div>
<div class="a" style="left:481.00px;top:312.94px;width:31.00px;height:7.92px;background:#17a796;"></div>
<div class="a" style="left:536.80px;top:312.94px;width:14.20px;height:7.92px;background:#17a796;"></div>
<div class="a" style="left:564.30px;top:312.94px;width:12.90px;height:7.92px;background:#17a796;"></div>
<div class="a" style="top:313.67px;font-size:6.10px;color:#454545;left:407.20px;transform:scaleX(1.0100);transform-origin:0 0;-webkit-text-stroke:.09px #454545;">Funcionario 50</div>
<div class="a" style="top:313.67px;font-size:6.10px;color:#3a3a3a;left:485.49px;transform:scaleX(0.9643);transform-origin:100% 0;-webkit-text-stroke:.09px #454545;">R$ 3.226.488,24</div>
<div class="a" style="top:313.67px;font-size:6.10px;color:#3a3a3a;left:541.00px;transform:scaleX(0.8210);transform-origin:100% 0;-webkit-text-stroke:.09px #454545;">4,82%</div>
<div class="a" style="top:313.67px;font-size:6.10px;color:#3a3a3a;left:565.25px;transform:scaleX(0.8617);transform-origin:100% 0;-webkit-text-stroke:.09px #454545;">154.770</div>
<div class="a" style="left:481.00px;top:321.36px;width:29.60px;height:7.92px;background:#17a796;"></div>
<div class="a" style="left:536.80px;top:321.36px;width:13.50px;height:7.92px;background:#17a796;"></div>
<div class="a" style="left:564.30px;top:321.36px;width:12.70px;height:7.92px;background:#17a796;"></div>
<div class="a" style="top:322.09px;font-size:6.10px;color:#454545;left:407.20px;transform:scaleX(1.0100);transform-origin:0 0;-webkit-text-stroke:.09px #454545;">Funcionario 631</div>
<div class="a" style="top:322.09px;font-size:6.10px;color:#3a3a3a;left:485.49px;transform:scaleX(0.9643);transform-origin:100% 0;-webkit-text-stroke:.09px #454545;">R$ 3.031.250,48</div>
<div class="a" style="top:322.09px;font-size:6.10px;color:#3a3a3a;left:541.00px;transform:scaleX(0.8210);transform-origin:100% 0;-webkit-text-stroke:.09px #454545;">4,50%</div>
<div class="a" style="top:322.09px;font-size:6.10px;color:#3a3a3a;left:565.25px;transform:scaleX(0.8617);transform-origin:100% 0;-webkit-text-stroke:.09px #454545;">138.898</div>
<div class="a" style="left:404.00px;top:329.53px;width:186.50px;height:8.42px;background:#c9c9c9;"></div>
<div class="a" style="left:481.00px;top:329.78px;width:27.90px;height:7.92px;background:#17a796;"></div>
<div class="a" style="left:536.80px;top:329.78px;width:12.90px;height:7.92px;background:#17a796;"></div>
<div class="a" style="left:564.30px;top:329.78px;width:12.20px;height:7.92px;background:#17a796;"></div>
<div class="a" style="top:330.51px;font-size:6.10px;color:#454545;left:407.20px;transform:scaleX(1.0100);transform-origin:0 0;-webkit-text-stroke:.09px #454545;">Funcionario 33</div>
<div class="a" style="top:330.51px;font-size:6.10px;color:#3a3a3a;left:485.49px;transform:scaleX(0.9643);transform-origin:100% 0;-webkit-text-stroke:.09px #454545;">R$ 2.917.475,78</div>
<div class="a" style="top:330.51px;font-size:6.10px;color:#3a3a3a;left:541.00px;transform:scaleX(0.8210);transform-origin:100% 0;-webkit-text-stroke:.09px #454545;">4,36%</div>
<div class="a" style="top:330.51px;font-size:6.10px;color:#3a3a3a;left:565.25px;transform:scaleX(0.8617);transform-origin:100% 0;-webkit-text-stroke:.09px #454545;">137.648</div>
<div class="a" style="left:602.40px;top:246.00px;width:222.10px;height:93.30px;background:#fff;"></div>
<div class="a" style="top:247.72px;font-size:7.70px;color:#6a6a6a;left:606.00px;transform:scaleX(0.9877);transform-origin:0 0;-webkit-text-stroke:.12px #6a6a6a;">Análise por Produto</div>
<div class="a" style="top:258.91px;font-size:6.20px;color:#5c5c5c;left:608.80px;transform:scaleX(1.0131);transform-origin:0 0;-webkit-text-stroke:.22px #5c5c5c;">Produto</div>
<div class="a" style="top:258.91px;font-size:6.20px;color:#5c5c5c;left:695.30px;transform:scaleX(0.9084);transform-origin:0 0;-webkit-text-stroke:.22px #5c5c5c;">R$</div>
<div class="a" style="top:258.91px;font-size:6.20px;color:#5c5c5c;left:756.40px;transform:scaleX(0.8867);transform-origin:0 0;-webkit-text-stroke:.22px #5c5c5c;">% Rep</div>
<div class="a" style="top:258.91px;font-size:6.20px;color:#5c5c5c;left:786.60px;transform:scaleX(0.9807);transform-origin:0 0;-webkit-text-stroke:.22px #5c5c5c;">Qtd</div>
<svg class="a" style="left:695.3px;top:265.6px" width="4.2" height="2.6" viewBox="0 0 5 3"><path d="M0 0h5L2.5 3z" fill="#222"/></svg>
<svg class="a" style="left:819.3px;top:259px" width="3.4" height="4" viewBox="0 0 3.4 4"><path d="M0 1.6L1.7 0l1.7 1.6v2.4H0z" fill="#aaa"/></svg>
<div class="a" style="left:606.00px;top:269.50px;width:211.00px;height:1.00px;background:#a6a6a6;"></div>
<div class="a" style="left:695.30px;top:270.84px;width:55.70px;height:7.92px;background:#17a796;"></div>
<div class="a" style="left:756.30px;top:270.84px;width:25.10px;height:7.92px;background:#17a796;"></div>
<div class="a" style="left:786.60px;top:270.84px;width:2.40px;height:7.92px;background:#17a796;"></div>
<div class="a" style="top:271.57px;font-size:6.10px;color:#454545;left:608.80px;transform:scaleX(1.0100);transform-origin:0 0;-webkit-text-stroke:.09px #454545;">Produto 405931</div>
<div class="a" style="top:271.57px;font-size:6.10px;color:#3a3a3a;left:705.29px;transform:scaleX(0.9850);transform-origin:100% 0;-webkit-text-stroke:.09px #454545;">R$ 1.106.214,98</div>
<div class="a" style="top:271.57px;font-size:6.10px;color:#3a3a3a;left:763.00px;transform:scaleX(0.8210);transform-origin:100% 0;-webkit-text-stroke:.09px #454545;">1,65%</div>
<div class="a" style="top:271.57px;font-size:6.10px;color:#3a3a3a;left:795.54px;transform:scaleX(0.9850);transform-origin:100% 0;-webkit-text-stroke:.09px #454545;">12.766</div>
<div class="a" style="left:606.00px;top:279.01px;width:211.00px;height:8.42px;background:#eeeeee;"></div>
<div class="a" style="left:695.30px;top:279.26px;width:24.70px;height:7.92px;background:#17a796;"></div>
<div class="a" style="left:756.30px;top:279.26px;width:10.70px;height:7.92px;background:#17a796;"></div>
<div class="a" style="left:786.60px;top:279.26px;width:0.90px;height:7.92px;background:#17a796;"></div>
<div class="a" style="top:279.99px;font-size:6.10px;color:#454545;left:608.80px;transform:scaleX(1.0100);transform-origin:0 0;-webkit-text-stroke:.09px #454545;">Produto 41679611</div>
<div class="a" style="top:279.99px;font-size:6.10px;color:#3a3a3a;left:710.38px;transform:scaleX(0.9850);transform-origin:100% 0;-webkit-text-stroke:.09px #454545;">R$ 509.887,28</div>
<div class="a" style="top:279.99px;font-size:6.10px;color:#3a3a3a;left:763.00px;transform:scaleX(0.8210);transform-origin:100% 0;-webkit-text-stroke:.09px #454545;">0,76%</div>
<div class="a" style="top:279.99px;font-size:6.10px;color:#3a3a3a;left:804.02px;transform:scaleX(0.9850);transform-origin:100% 0;-webkit-text-stroke:.09px #454545;">526</div>
<div class="a" style="left:695.30px;top:287.68px;width:19.50px;height:7.92px;background:#17a796;"></div>
<div class="a" style="left:756.30px;top:287.68px;width:8.50px;height:7.92px;background:#17a796;"></div>
<div class="a" style="left:786.60px;top:287.68px;width:15.40px;height:7.92px;background:#17a796;"></div>
<div class="a" style="top:288.41px;font-size:6.10px;color:#454545;left:608.80px;transform:scaleX(1.0100);transform-origin:0 0;-webkit-text-stroke:.09px #454545;">Produto 21108</div>
<div class="a" style="top:288.41px;font-size:6.10px;color:#3a3a3a;left:710.38px;transform:scaleX(0.9850);transform-origin:100% 0;-webkit-text-stroke:.09px #454545;">R$ 413.560,60</div>
<div class="a" style="top:288.41px;font-size:6.10px;color:#3a3a3a;left:763.00px;transform:scaleX(0.8210);transform-origin:100% 0;-webkit-text-stroke:.09px #454545;">0,62%</div>
<div class="a" style="top:288.41px;font-size:6.10px;color:#3a3a3a;left:795.54px;transform:scaleX(0.9850);transform-origin:100% 0;-webkit-text-stroke:.09px #454545;">75.250</div>
<div class="a" style="left:606.00px;top:295.85px;width:211.00px;height:8.42px;background:#eeeeee;"></div>
<div class="a" style="left:695.30px;top:296.10px;width:14.70px;height:7.92px;background:#17a796;"></div>
<div class="a" style="left:756.30px;top:296.10px;width:6.20px;height:7.92px;background:#17a796;"></div>
<div class="a" style="left:786.60px;top:296.10px;width:1.40px;height:7.92px;background:#17a796;"></div>
<div class="a" style="top:296.83px;font-size:6.10px;color:#454545;left:608.80px;transform:scaleX(1.0100);transform-origin:0 0;-webkit-text-stroke:.09px #454545;">Produto 4154443</div>
<div class="a" style="top:296.83px;font-size:6.10px;color:#3a3a3a;left:710.38px;transform:scaleX(0.9850);transform-origin:100% 0;-webkit-text-stroke:.09px #454545;">R$ 319.754,10</div>
<div class="a" style="top:296.83px;font-size:6.10px;color:#3a3a3a;left:763.00px;transform:scaleX(0.8210);transform-origin:100% 0;-webkit-text-stroke:.09px #454545;">0,48%</div>
<div class="a" style="top:296.83px;font-size:6.10px;color:#3a3a3a;left:798.93px;transform:scaleX(0.9850);transform-origin:100% 0;-webkit-text-stroke:.09px #454545;">2.716</div>
<div class="a" style="left:695.30px;top:304.52px;width:14.70px;height:7.92px;background:#17a796;"></div>
<div class="a" style="left:756.30px;top:304.52px;width:6.20px;height:7.92px;background:#17a796;"></div>
<div class="a" style="left:786.60px;top:304.52px;width:23.00px;height:7.92px;background:#17a796;"></div>
<div class="a" style="top:305.25px;font-size:6.10px;color:#454545;left:608.80px;transform:scaleX(1.0100);transform-origin:0 0;-webkit-text-stroke:.09px #454545;">Produto 31603</div>
<div class="a" style="top:305.25px;font-size:6.10px;color:#3a3a3a;left:710.38px;transform:scaleX(0.9850);transform-origin:100% 0;-webkit-text-stroke:.09px #454545;">R$ 316.321,32</div>
<div class="a" style="top:305.25px;font-size:6.10px;color:#3a3a3a;left:763.00px;transform:scaleX(0.8210);transform-origin:100% 0;-webkit-text-stroke:.09px #454545;">0,47%</div>
<div class="a" style="top:305.25px;font-size:6.10px;color:#3a3a3a;left:792.15px;transform:scaleX(0.9850);transform-origin:100% 0;-webkit-text-stroke:.09px #454545;">109.924</div>
<div class="a" style="left:606.00px;top:312.69px;width:211.00px;height:8.42px;background:#eeeeee;"></div>
<div class="a" style="left:695.30px;top:312.94px;width:14.70px;height:7.92px;background:#17a796;"></div>
<div class="a" style="left:756.30px;top:312.94px;width:6.20px;height:7.92px;background:#17a796;"></div>
<div class="a" style="left:786.60px;top:312.94px;width:1.70px;height:7.92px;background:#17a796;"></div>
<div class="a" style="top:313.67px;font-size:6.10px;color:#454545;left:608.80px;transform:scaleX(1.0100);transform-origin:0 0;-webkit-text-stroke:.09px #454545;">Produto 40087</div>
<div class="a" style="top:313.67px;font-size:6.10px;color:#3a3a3a;left:710.38px;transform:scaleX(0.9850);transform-origin:100% 0;-webkit-text-stroke:.09px #454545;">R$ 313.190,96</div>
<div class="a" style="top:313.67px;font-size:6.10px;color:#3a3a3a;left:763.00px;transform:scaleX(0.8210);transform-origin:100% 0;-webkit-text-stroke:.09px #454545;">0,47%</div>
<div class="a" style="top:313.67px;font-size:6.10px;color:#3a3a3a;left:798.93px;transform:scaleX(0.9850);transform-origin:100% 0;-webkit-text-stroke:.09px #454545;">8.150</div>
<div class="a" style="left:695.30px;top:321.36px;width:13.70px;height:7.92px;background:#17a796;"></div>
<div class="a" style="left:756.30px;top:321.36px;width:6.20px;height:7.92px;background:#17a796;"></div>
<div class="a" style="left:786.60px;top:321.36px;width:0.90px;height:7.92px;background:#17a796;"></div>
<div class="a" style="top:322.09px;font-size:6.10px;color:#454545;left:608.80px;transform:scaleX(1.0100);transform-origin:0 0;-webkit-text-stroke:.09px #454545;">Produto 41680051</div>
<div class="a" style="top:322.09px;font-size:6.10px;color:#3a3a3a;left:710.38px;transform:scaleX(0.9850);transform-origin:100% 0;-webkit-text-stroke:.09px #454545;">R$ 293.128,38</div>
<div class="a" style="top:322.09px;font-size:6.10px;color:#3a3a3a;left:763.00px;transform:scaleX(0.8210);transform-origin:100% 0;-webkit-text-stroke:.09px #454545;">0,44%</div>
<div class="a" style="top:322.09px;font-size:6.10px;color:#3a3a3a;left:798.93px;transform:scaleX(0.9850);transform-origin:100% 0;-webkit-text-stroke:.09px #454545;">1.718</div>
<div class="a" style="left:606.00px;top:329.30px;width:211.00px;height:0.70px;background:#bdbdbd;"></div>
<div class="a" style="top:330.57px;font-size:6.10px;color:#333;font-weight:bold;left:608.80px;transform:scaleX(0.9208);transform-origin:0 0;-webkit-text-stroke:.15px #333;">Total</div>
<div class="a" style="top:330.57px;font-size:6.10px;color:#333;font-weight:bold;left:702.23px;transform:scaleX(0.9862);transform-origin:100% 0;-webkit-text-stroke:.15px #333;">R$ 66.852.311,30</div>
<div class="a" style="top:330.57px;font-size:6.10px;color:#333;font-weight:bold;left:756.22px;transform:scaleX(0.9260);transform-origin:100% 0;-webkit-text-stroke:.15px #333;">100,00%</div>
<div class="a" style="top:330.57px;font-size:6.10px;color:#333;font-weight:bold;left:787.06px;transform:scaleX(0.9581);transform-origin:100% 0;-webkit-text-stroke:.15px #333;">3.318.134</div>
<!-- detail -->
<div class="a" style="left:401.00px;top:343.00px;width:542.80px;height:151.50px;background:#fff;"></div>
<div class="a" style="top:344.12px;font-size:7.70px;color:#6a6a6a;left:404.00px;transform:scaleX(0.9633);transform-origin:0 0;-webkit-text-stroke:.12px #6a6a6a;">Detalhamento de Vendas</div>
<div class="a" style="top:354.81px;font-size:6.20px;color:#5c5c5c;left:416.95px;transform:scaleX(1.0308);transform-origin:50% 0;-webkit-text-stroke:.22px #5c5c5c;">Data</div>
<div class="a" style="top:354.81px;font-size:6.20px;color:#5c5c5c;left:447.81px;transform:scaleX(0.9756);transform-origin:50% 0;-webkit-text-stroke:.22px #5c5c5c;">Cupom</div>
<div class="a" style="top:354.81px;font-size:6.20px;color:#5c5c5c;left:475.30px;transform:scaleX(0.9735);transform-origin:50% 0;-webkit-text-stroke:.22px #5c5c5c;">Cod Prod</div>
<div class="a" style="top:354.81px;font-size:6.20px;color:#5c5c5c;left:525.84px;transform:scaleX(1.0131);transform-origin:50% 0;-webkit-text-stroke:.22px #5c5c5c;">Produto</div>
<div class="a" style="top:354.81px;font-size:6.20px;color:#5c5c5c;left:575.72px;transform:scaleX(1.0520);transform-origin:50% 0;-webkit-text-stroke:.22px #5c5c5c;">Laboratório</div>
<div class="a" style="top:354.81px;font-size:6.20px;color:#5c5c5c;left:617.30px;transform:scaleX(0.9807);transform-origin:50% 0;-webkit-text-stroke:.22px #5c5c5c;">Qtd</div>
<div class="a" style="top:354.81px;font-size:6.20px;color:#5c5c5c;left:637.97px;-webkit-text-stroke:.22px #5c5c5c;">R$ Bruto</div>
<div class="a" style="top:354.81px;font-size:6.20px;color:#5c5c5c;left:672.09px;transform:scaleX(0.9722);transform-origin:50% 0;-webkit-text-stroke:.22px #5c5c5c;">% Desconto</div>
<div class="a" style="top:354.81px;font-size:6.20px;color:#5c5c5c;left:714.21px;transform:scaleX(0.9837);transform-origin:50% 0;-webkit-text-stroke:.22px #5c5c5c;">R$ Líquido</div>
<div class="a" style="top:354.81px;font-size:6.20px;color:#5c5c5c;left:761.71px;transform:scaleX(0.9072);transform-origin:50% 0;-webkit-text-stroke:.22px #5c5c5c;">CMV</div>
<div class="a" style="top:354.81px;font-size:6.20px;color:#5c5c5c;left:792.21px;transform:scaleX(0.9257);transform-origin:50% 0;-webkit-text-stroke:.22px #5c5c5c;">% MLB</div>
<div class="a" style="top:354.81px;font-size:6.20px;color:#5c5c5c;left:832.93px;-webkit-text-stroke:.22px #5c5c5c;">Vendedor</div>
<div class="a" style="top:354.81px;font-size:6.20px;color:#5c5c5c;left:896.05px;transform:scaleX(1.0104);transform-origin:50% 0;-webkit-text-stroke:.22px #5c5c5c;">Cliente</div>
<svg class="a" style="left:407px;top:362px" width="4.2" height="2.6" viewBox="0 0 5 3"><path d="M0 0h5L2.5 3z" fill="#222"/></svg>
<svg class="a" style="left:937.6px;top:354.5px" width="3.4" height="4" viewBox="0 0 3.4 4"><path d="M0 1.6L1.7 0l1.7 1.6v2.4H0z" fill="#aaa"/></svg>
<div class="a" style="left:404.00px;top:366.20px;width:532.50px;height:1.00px;background:#a6a6a6;"></div>
<div class="a" style="top:367.97px;font-size:6.10px;color:#454545;left:407.80px;transform:scaleX(1.0100);transform-origin:0 0;-webkit-text-stroke:.09px #454545;">17/06/2025</div>
<div class="a" style="top:367.97px;font-size:6.10px;color:#454545;left:446.40px;transform:scaleX(1.0100);transform-origin:0 0;-webkit-text-stroke:.09px #454545;">133194...</div>
<div class="a" style="top:367.97px;font-size:6.10px;color:#454545;left:476.00px;transform:scaleX(1.0100);transform-origin:0 0;-webkit-text-stroke:.09px #454545;">10174</div>
<div class="a" style="top:367.97px;font-size:6.10px;color:#454545;left:506.80px;transform:scaleX(1.0100);transform-origin:0 0;-webkit-text-stroke:.09px #454545;">Produto 10174</div>
<div class="a" style="top:367.97px;font-size:6.10px;color:#454545;left:571.30px;transform:scaleX(1.0100);transform-origin:0 0;-webkit-text-stroke:.09px #454545;">Laboratorio ...</div>
<div class="a" style="top:367.97px;font-size:6.10px;color:#454545;left:625.00px;transform:scaleX(1.0100);transform-origin:50% 0;-webkit-text-stroke:.09px #454545;">1</div>
<div class="a" style="top:367.97px;font-size:6.10px;color:#454545;left:644.93px;transform:scaleX(1.0100);transform-origin:100% 0;-webkit-text-stroke:.09px #454545;">R$ 1,88</div>
<div class="a" style="top:367.97px;font-size:6.10px;color:#454545;left:687.70px;transform:scaleX(1.0100);transform-origin:100% 0;-webkit-text-stroke:.09px #454545;">0,00%</div>
<div class="a" style="top:367.97px;font-size:6.10px;color:#454545;left:726.63px;transform:scaleX(1.0100);transform-origin:100% 0;-webkit-text-stroke:.09px #454545;">R$ 1,88</div>
<div class="a" style="top:367.97px;font-size:6.10px;color:#454545;left:762.03px;transform:scaleX(1.0100);transform-origin:100% 0;-webkit-text-stroke:.09px #454545;">R$ 1,13</div>
<div class="a" style="top:367.97px;font-size:6.10px;color:#454545;left:793.61px;transform:scaleX(1.0100);transform-origin:100% 0;-webkit-text-stroke:.09px #454545;">39,89%</div>
<div class="a" style="top:367.97px;font-size:6.10px;color:#454545;left:820.30px;transform:scaleX(1.0100);transform-origin:0 0;-webkit-text-stroke:.09px #454545;">Funcionario 531</div>
<div class="a" style="top:367.97px;font-size:6.10px;color:#454545;left:878.20px;transform:scaleX(1.0100);transform-origin:0 0;-webkit-text-stroke:.09px #454545;">Cliente 18470162...</div>
<div class="a" style="left:404.00px;top:375.40px;width:532.50px;height:8.40px;background:#eeeeee;"></div>
<div class="a" style="top:376.37px;font-size:6.10px;color:#454545;left:407.80px;transform:scaleX(1.0100);transform-origin:0 0;-webkit-text-stroke:.09px #454545;">17/06/2025</div>
<div class="a" style="top:376.37px;font-size:6.10px;color:#454545;left:446.40px;transform:scaleX(1.0100);transform-origin:0 0;-webkit-text-stroke:.09px #454545;">134281...</div>
<div class="a" style="top:376.37px;font-size:6.10px;color:#454545;left:476.00px;transform:scaleX(1.0100);transform-origin:0 0;-webkit-text-stroke:.09px #454545;">10174</div>
<div class="a" style="top:376.37px;font-size:6.10px;color:#454545;left:506.80px;transform:scaleX(1.0100);transform-origin:0 0;-webkit-text-stroke:.09px #454545;">Produto 10174</div>
<div class="a" style="top:376.37px;font-size:6.10px;color:#454545;left:571.30px;transform:scaleX(1.0100);transform-origin:0 0;-webkit-text-stroke:.09px #454545;">Laboratorio ...</div>
<div class="a" style="top:376.37px;font-size:6.10px;color:#454545;left:625.00px;transform:scaleX(1.0100);transform-origin:50% 0;-webkit-text-stroke:.09px #454545;">1</div>
<div class="a" style="top:376.37px;font-size:6.10px;color:#454545;left:644.93px;transform:scaleX(1.0100);transform-origin:100% 0;-webkit-text-stroke:.09px #454545;">R$ 1,88</div>
<div class="a" style="top:376.37px;font-size:6.10px;color:#454545;left:687.70px;transform:scaleX(1.0100);transform-origin:100% 0;-webkit-text-stroke:.09px #454545;">0,00%</div>
<div class="a" style="top:376.37px;font-size:6.10px;color:#454545;left:726.63px;transform:scaleX(1.0100);transform-origin:100% 0;-webkit-text-stroke:.09px #454545;">R$ 1,88</div>
<div class="a" style="top:376.37px;font-size:6.10px;color:#454545;left:762.03px;transform:scaleX(1.0100);transform-origin:100% 0;-webkit-text-stroke:.09px #454545;">R$ 1,13</div>
<div class="a" style="top:376.37px;font-size:6.10px;color:#454545;left:793.61px;transform:scaleX(1.0100);transform-origin:100% 0;-webkit-text-stroke:.09px #454545;">39,89%</div>
<div class="a" style="top:376.37px;font-size:6.10px;color:#454545;left:820.30px;transform:scaleX(1.0100);transform-origin:0 0;-webkit-text-stroke:.09px #454545;">Funcionario 531</div>
<div class="a" style="top:376.37px;font-size:6.10px;color:#454545;left:878.20px;transform:scaleX(1.0100);transform-origin:0 0;-webkit-text-stroke:.09px #454545;">Cliente 18470162...</div>
<div class="a" style="top:384.57px;font-size:6.10px;color:#454545;left:407.80px;transform:scaleX(1.0100);transform-origin:0 0;-webkit-text-stroke:.09px #454545;">17/06/2025</div>
<div class="a" style="top:384.57px;font-size:6.10px;color:#454545;left:446.40px;transform:scaleX(1.0100);transform-origin:0 0;-webkit-text-stroke:.09px #454545;">133190...</div>
<div class="a" style="top:384.57px;font-size:6.10px;color:#454545;left:476.00px;transform:scaleX(1.0100);transform-origin:0 0;-webkit-text-stroke:.09px #454545;">10239</div>
<div class="a" style="top:384.57px;font-size:6.10px;color:#454545;left:506.80px;transform:scaleX(1.0100);transform-origin:0 0;-webkit-text-stroke:.09px #454545;">Produto 10239</div>
<div class="a" style="top:384.57px;font-size:6.10px;color:#454545;left:571.30px;transform:scaleX(1.0100);transform-origin:0 0;-webkit-text-stroke:.09px #454545;">Laboratorio 2</div>
<div class="a" style="top:384.57px;font-size:6.10px;color:#454545;left:625.00px;transform:scaleX(1.0100);transform-origin:50% 0;-webkit-text-stroke:.09px #454545;">1</div>
<div class="a" style="top:384.57px;font-size:6.10px;color:#454545;left:641.54px;transform:scaleX(1.0100);transform-origin:100% 0;-webkit-text-stroke:.09px #454545;">R$ 26,85</div>
<div class="a" style="top:384.57px;font-size:6.10px;color:#454545;left:684.31px;transform:scaleX(1.0100);transform-origin:100% 0;-webkit-text-stroke:.09px #454545;">16,01%</div>
<div class="a" style="top:384.57px;font-size:6.10px;color:#454545;left:723.24px;transform:scaleX(1.0100);transform-origin:100% 0;-webkit-text-stroke:.09px #454545;">R$ 22,55</div>
<div class="a" style="top:384.57px;font-size:6.10px;color:#454545;left:758.64px;transform:scaleX(1.0100);transform-origin:100% 0;-webkit-text-stroke:.09px #454545;">R$ 21,47</div>
<div class="a" style="top:384.57px;font-size:6.10px;color:#454545;left:797.00px;transform:scaleX(1.0100);transform-origin:100% 0;-webkit-text-stroke:.09px #454545;">4,79%</div>
<div class="a" style="top:384.57px;font-size:6.10px;color:#454545;left:820.30px;transform:scaleX(1.0100);transform-origin:0 0;-webkit-text-stroke:.09px #454545;">Funcionario 591</div>
<div class="a" style="top:384.57px;font-size:6.10px;color:#454545;left:878.20px;transform:scaleX(1.0100);transform-origin:0 0;-webkit-text-stroke:.09px #454545;">Cliente 18469834...</div>
<div class="a" style="left:404.00px;top:392.10px;width:532.50px;height:8.40px;background:#eeeeee;"></div>
<div class="a" style="top:393.07px;font-size:6.10px;color:#454545;left:407.80px;transform:scaleX(1.0100);transform-origin:0 0;-webkit-text-stroke:.09px #454545;">17/06/2025</div>
<div class="a" style="top:393.07px;font-size:6.10px;color:#454545;left:446.40px;transform:scaleX(1.0100);transform-origin:0 0;-webkit-text-stroke:.09px #454545;">133216...</div>
<div class="a" style="top:393.07px;font-size:6.10px;color:#454545;left:476.00px;transform:scaleX(1.0100);transform-origin:0 0;-webkit-text-stroke:.09px #454545;">10239</div>
<div class="a" style="top:393.07px;font-size:6.10px;color:#454545;left:506.80px;transform:scaleX(1.0100);transform-origin:0 0;-webkit-text-stroke:.09px #454545;">Produto 10239</div>
<div class="a" style="top:393.07px;font-size:6.10px;color:#454545;left:571.30px;transform:scaleX(1.0100);transform-origin:0 0;-webkit-text-stroke:.09px #454545;">Laboratorio 2</div>
<div class="a" style="top:393.07px;font-size:6.10px;color:#454545;left:625.00px;transform:scaleX(1.0100);transform-origin:50% 0;-webkit-text-stroke:.09px #454545;">1</div>
<div class="a" style="top:393.07px;font-size:6.10px;color:#454545;left:641.54px;transform:scaleX(1.0100);transform-origin:100% 0;-webkit-text-stroke:.09px #454545;">R$ 26,85</div>
<div class="a" style="top:393.07px;font-size:6.10px;color:#454545;left:684.31px;transform:scaleX(1.0100);transform-origin:100% 0;-webkit-text-stroke:.09px #454545;">13,56%</div>
<div class="a" style="top:393.07px;font-size:6.10px;color:#454545;left:723.24px;transform:scaleX(1.0100);transform-origin:100% 0;-webkit-text-stroke:.09px #454545;">R$ 23,21</div>
<div class="a" style="top:393.07px;font-size:6.10px;color:#454545;left:758.64px;transform:scaleX(1.0100);transform-origin:100% 0;-webkit-text-stroke:.09px #454545;">R$ 21,47</div>
<div class="a" style="top:393.07px;font-size:6.10px;color:#454545;left:797.00px;transform:scaleX(1.0100);transform-origin:100% 0;-webkit-text-stroke:.09px #454545;">7,50%</div>
<div class="a" style="top:393.07px;font-size:6.10px;color:#454545;left:820.30px;transform:scaleX(1.0100);transform-origin:0 0;-webkit-text-stroke:.09px #454545;">Funcionario 971</div>
<div class="a" style="top:393.07px;font-size:6.10px;color:#454545;left:878.20px;transform:scaleX(1.0100);transform-origin:0 0;-webkit-text-stroke:.09px #454545;">Cliente 18469745...</div>
<div class="a" style="top:401.37px;font-size:6.10px;color:#454545;left:407.80px;transform:scaleX(1.0100);transform-origin:0 0;-webkit-text-stroke:.09px #454545;">17/06/2025</div>
<div class="a" style="top:401.37px;font-size:6.10px;color:#454545;left:446.40px;transform:scaleX(1.0100);transform-origin:0 0;-webkit-text-stroke:.09px #454545;">133228...</div>
<div class="a" style="top:401.37px;font-size:6.10px;color:#454545;left:476.00px;transform:scaleX(1.0100);transform-origin:0 0;-webkit-text-stroke:.09px #454545;">10239</div>
<div class="a" style="top:401.37px;font-size:6.10px;color:#454545;left:506.80px;transform:scaleX(1.0100);transform-origin:0 0;-webkit-text-stroke:.09px #454545;">Produto 10239</div>
<div class="a" style="top:401.37px;font-size:6.10px;color:#454545;left:571.30px;transform:scaleX(1.0100);transform-origin:0 0;-webkit-text-stroke:.09px #454545;">Laboratorio 2</div>
<div class="a" style="top:401.37px;font-size:6.10px;color:#454545;left:625.00px;transform:scaleX(1.0100);transform-origin:50% 0;-webkit-text-stroke:.09px #454545;">1</div>
<div class="a" style="top:401.37px;font-size:6.10px;color:#454545;left:641.54px;transform:scaleX(1.0100);transform-origin:100% 0;-webkit-text-stroke:.09px #454545;">R$ 26,85</div>
<div class="a" style="top:401.37px;font-size:6.10px;color:#454545;left:684.31px;transform:scaleX(1.0100);transform-origin:100% 0;-webkit-text-stroke:.09px #454545;">13,56%</div>
<div class="a" style="top:401.37px;font-size:6.10px;color:#454545;left:723.24px;transform:scaleX(1.0100);transform-origin:100% 0;-webkit-text-stroke:.09px #454545;">R$ 23,21</div>
<div class="a" style="top:401.37px;font-size:6.10px;color:#454545;left:758.64px;transform:scaleX(1.0100);transform-origin:100% 0;-webkit-text-stroke:.09px #454545;">R$ 21,47</div>
<div class="a" style="top:401.37px;font-size:6.10px;color:#454545;left:797.00px;transform:scaleX(1.0100);transform-origin:100% 0;-webkit-text-stroke:.09px #454545;">7,50%</div>
<div class="a" style="top:401.37px;font-size:6.10px;color:#454545;left:820.30px;transform:scaleX(1.0100);transform-origin:0 0;-webkit-text-stroke:.09px #454545;">Funcionario 33</div>
<div class="a" style="top:401.37px;font-size:6.10px;color:#454545;left:878.20px;transform:scaleX(1.0100);transform-origin:0 0;-webkit-text-stroke:.09px #454545;">Cliente 18469836...</div>
<div class="a" style="left:404.00px;top:408.70px;width:532.50px;height:8.40px;background:#eeeeee;"></div>
<div class="a" style="top:409.67px;font-size:6.10px;color:#454545;left:407.80px;transform:scaleX(1.0100);transform-origin:0 0;-webkit-text-stroke:.09px #454545;">17/06/2025</div>
<div class="a" style="top:409.67px;font-size:6.10px;color:#454545;left:446.40px;transform:scaleX(1.0100);transform-origin:0 0;-webkit-text-stroke:.09px #454545;">134194...</div>
<div class="a" style="top:409.67px;font-size:6.10px;color:#454545;left:476.00px;transform:scaleX(1.0100);transform-origin:0 0;-webkit-text-stroke:.09px #454545;">10239</div>
<div class="a" style="top:409.67px;font-size:6.10px;color:#454545;left:506.80px;transform:scaleX(1.0100);transform-origin:0 0;-webkit-text-stroke:.09px #454545;">Produto 10239</div>
<div class="a" style="top:409.67px;font-size:6.10px;color:#454545;left:571.30px;transform:scaleX(1.0100);transform-origin:0 0;-webkit-text-stroke:.09px #454545;">Laboratorio 2</div>
<div class="a" style="top:409.67px;font-size:6.10px;color:#454545;left:625.00px;transform:scaleX(1.0100);transform-origin:50% 0;-webkit-text-stroke:.09px #454545;">1</div>
<div class="a" style="top:409.67px;font-size:6.10px;color:#454545;left:641.54px;transform:scaleX(1.0100);transform-origin:100% 0;-webkit-text-stroke:.09px #454545;">R$ 26,85</div>
<div class="a" style="top:409.67px;font-size:6.10px;color:#454545;left:684.31px;transform:scaleX(1.0100);transform-origin:100% 0;-webkit-text-stroke:.09px #454545;">16,01%</div>
<div class="a" style="top:409.67px;font-size:6.10px;color:#454545;left:723.24px;transform:scaleX(1.0100);transform-origin:100% 0;-webkit-text-stroke:.09px #454545;">R$ 22,55</div>
<div class="a" style="top:409.67px;font-size:6.10px;color:#454545;left:758.64px;transform:scaleX(1.0100);transform-origin:100% 0;-webkit-text-stroke:.09px #454545;">R$ 21,47</div>
<div class="a" style="top:409.67px;font-size:6.10px;color:#454545;left:797.00px;transform:scaleX(1.0100);transform-origin:100% 0;-webkit-text-stroke:.09px #454545;">4,79%</div>
<div class="a" style="top:409.67px;font-size:6.10px;color:#454545;left:820.30px;transform:scaleX(1.0100);transform-origin:0 0;-webkit-text-stroke:.09px #454545;">Funcionario 591</div>
<div class="a" style="top:409.67px;font-size:6.10px;color:#454545;left:878.20px;transform:scaleX(1.0100);transform-origin:0 0;-webkit-text-stroke:.09px #454545;">Cliente 18469834...</div>
<div class="a" style="top:417.77px;font-size:6.10px;color:#454545;left:407.80px;transform:scaleX(1.0100);transform-origin:0 0;-webkit-text-stroke:.09px #454545;">17/06/2025</div>
<div class="a" style="top:417.77px;font-size:6.10px;color:#454545;left:446.40px;transform:scaleX(1.0100);transform-origin:0 0;-webkit-text-stroke:.09px #454545;">13428...</div>
<div class="a" style="top:417.77px;font-size:6.10px;color:#454545;left:476.00px;transform:scaleX(1.0100);transform-origin:0 0;-webkit-text-stroke:.09px #454545;">10239</div>
<div class="a" style="top:417.77px;font-size:6.10px;color:#454545;left:506.80px;transform:scaleX(1.0100);transform-origin:0 0;-webkit-text-stroke:.09px #454545;">Produto 10239</div>
<div class="a" style="top:417.77px;font-size:6.10px;color:#454545;left:571.30px;transform:scaleX(1.0100);transform-origin:0 0;-webkit-text-stroke:.09px #454545;">Laboratorio 2</div>
<div class="a" style="top:417.77px;font-size:6.10px;color:#454545;left:625.00px;transform:scaleX(1.0100);transform-origin:50% 0;-webkit-text-stroke:.09px #454545;">1</div>
<div class="a" style="top:417.77px;font-size:6.10px;color:#454545;left:641.54px;transform:scaleX(1.0100);transform-origin:100% 0;-webkit-text-stroke:.09px #454545;">R$ 26,85</div>
<div class="a" style="top:417.77px;font-size:6.10px;color:#454545;left:684.31px;transform:scaleX(1.0100);transform-origin:100% 0;-webkit-text-stroke:.09px #454545;">13,56%</div>
<div class="a" style="top:417.77px;font-size:6.10px;color:#454545;left:723.24px;transform:scaleX(1.0100);transform-origin:100% 0;-webkit-text-stroke:.09px #454545;">R$ 23,21</div>
<div class="a" style="top:417.77px;font-size:6.10px;color:#454545;left:758.64px;transform:scaleX(1.0100);transform-origin:100% 0;-webkit-text-stroke:.09px #454545;">R$ 21,47</div>
<div class="a" style="top:417.77px;font-size:6.10px;color:#454545;left:797.00px;transform:scaleX(1.0100);transform-origin:100% 0;-webkit-text-stroke:.09px #454545;">7,50%</div>
<div class="a" style="top:417.77px;font-size:6.10px;color:#454545;left:820.30px;transform:scaleX(1.0100);transform-origin:0 0;-webkit-text-stroke:.09px #454545;">Funcionario 971</div>
<div class="a" style="top:417.77px;font-size:6.10px;color:#454545;left:878.20px;transform:scaleX(1.0100);transform-origin:0 0;-webkit-text-stroke:.09px #454545;">Cliente 18469745...</div>
<div class="a" style="left:404.00px;top:425.20px;width:532.50px;height:8.40px;background:#eeeeee;"></div>
<div class="a" style="top:426.17px;font-size:6.10px;color:#454545;left:407.80px;transform:scaleX(1.0100);transform-origin:0 0;-webkit-text-stroke:.09px #454545;">17/06/2025</div>
<div class="a" style="top:426.17px;font-size:6.10px;color:#454545;left:446.40px;transform:scaleX(1.0100);transform-origin:0 0;-webkit-text-stroke:.09px #454545;">134314...</div>
<div class="a" style="top:426.17px;font-size:6.10px;color:#454545;left:476.00px;transform:scaleX(1.0100);transform-origin:0 0;-webkit-text-stroke:.09px #454545;">10239</div>
<div class="a" style="top:426.17px;font-size:6.10px;color:#454545;left:506.80px;transform:scaleX(1.0100);transform-origin:0 0;-webkit-text-stroke:.09px #454545;">Produto 10239</div>
<div class="a" style="top:426.17px;font-size:6.10px;color:#454545;left:571.30px;transform:scaleX(1.0100);transform-origin:0 0;-webkit-text-stroke:.09px #454545;">Laboratorio 2</div>
<div class="a" style="top:426.17px;font-size:6.10px;color:#454545;left:625.00px;transform:scaleX(1.0100);transform-origin:50% 0;-webkit-text-stroke:.09px #454545;">1</div>
<div class="a" style="top:426.17px;font-size:6.10px;color:#454545;left:641.54px;transform:scaleX(1.0100);transform-origin:100% 0;-webkit-text-stroke:.09px #454545;">R$ 26,85</div>
<div class="a" style="top:426.17px;font-size:6.10px;color:#454545;left:684.31px;transform:scaleX(1.0100);transform-origin:100% 0;-webkit-text-stroke:.09px #454545;">13,56%</div>
<div class="a" style="top:426.17px;font-size:6.10px;color:#454545;left:723.24px;transform:scaleX(1.0100);transform-origin:100% 0;-webkit-text-stroke:.09px #454545;">R$ 23,21</div>
<div class="a" style="top:426.17px;font-size:6.10px;color:#454545;left:758.64px;transform:scaleX(1.0100);transform-origin:100% 0;-webkit-text-stroke:.09px #454545;">R$ 21,47</div>
<div class="a" style="top:426.17px;font-size:6.10px;color:#454545;left:797.00px;transform:scaleX(1.0100);transform-origin:100% 0;-webkit-text-stroke:.09px #454545;">7,50%</div>
<div class="a" style="top:426.17px;font-size:6.10px;color:#454545;left:820.30px;transform:scaleX(1.0100);transform-origin:0 0;-webkit-text-stroke:.09px #454545;">Funcionario 33</div>
<div class="a" style="top:426.17px;font-size:6.10px;color:#454545;left:878.20px;transform:scaleX(1.0100);transform-origin:0 0;-webkit-text-stroke:.09px #454545;">Cliente 18469836...</div>
<div class="a" style="top:435.07px;font-size:6.10px;color:#454545;left:407.80px;transform:scaleX(1.0100);transform-origin:0 0;-webkit-text-stroke:.09px #454545;">17/06/2025</div>
<div class="a" style="top:435.07px;font-size:6.10px;color:#454545;left:446.40px;transform:scaleX(1.0100);transform-origin:0 0;-webkit-text-stroke:.09px #454545;">309160...</div>
<div class="a" style="top:435.07px;font-size:6.10px;color:#454545;left:476.00px;transform:scaleX(1.0100);transform-origin:0 0;-webkit-text-stroke:.09px #454545;">1055</div>
<div class="a" style="top:435.07px;font-size:6.10px;color:#454545;left:506.80px;transform:scaleX(1.0100);transform-origin:0 0;-webkit-text-stroke:.09px #454545;">Produto 1055</div>
<div class="a" style="top:435.07px;font-size:6.10px;color:#454545;left:571.30px;transform:scaleX(1.0100);transform-origin:0 0;-webkit-text-stroke:.09px #454545;">Laboratorio ...</div>
<div class="a" style="top:435.07px;font-size:6.10px;color:#454545;left:625.00px;transform:scaleX(1.0100);transform-origin:50% 0;-webkit-text-stroke:.09px #454545;">1</div>
<div class="a" style="top:435.07px;font-size:6.10px;color:#454545;left:641.54px;transform:scaleX(1.0100);transform-origin:100% 0;-webkit-text-stroke:.09px #454545;">R$ 37,37</div>
<div class="a" style="top:435.07px;font-size:6.10px;color:#454545;left:684.76px;transform:scaleX(1.0100);transform-origin:100% 0;-webkit-text-stroke:.09px #454545;">11,77%</div>
<div class="a" style="top:435.07px;font-size:6.10px;color:#454545;left:723.24px;transform:scaleX(1.0100);transform-origin:100% 0;-webkit-text-stroke:.09px #454545;">R$ 32,98</div>
<div class="a" style="top:435.07px;font-size:6.10px;color:#454545;left:758.64px;transform:scaleX(1.0100);transform-origin:100% 0;-webkit-text-stroke:.09px #454545;">R$ 24,95</div>
<div class="a" style="top:435.07px;font-size:6.10px;color:#454545;left:793.61px;transform:scaleX(1.0100);transform-origin:100% 0;-webkit-text-stroke:.09px #454545;">24,35%</div>
<div class="a" style="top:435.07px;font-size:6.10px;color:#454545;left:820.30px;transform:scaleX(1.0100);transform-origin:0 0;-webkit-text-stroke:.09px #454545;">Funcionario 275</div>
<div class="a" style="top:435.07px;font-size:6.10px;color:#454545;left:878.20px;transform:scaleX(1.0100);transform-origin:0 0;-webkit-text-stroke:.09px #454545;">Cliente 0</div>
<div class="a" style="left:404.00px;top:442.50px;width:532.50px;height:8.40px;background:#eeeeee;"></div>
<div class="a" style="top:443.47px;font-size:6.10px;color:#454545;left:407.80px;transform:scaleX(1.0100);transform-origin:0 0;-webkit-text-stroke:.09px #454545;">17/06/2025</div>
<div class="a" style="top:443.47px;font-size:6.10px;color:#454545;left:446.40px;transform:scaleX(1.0100);transform-origin:0 0;-webkit-text-stroke:.09px #454545;">31017...</div>
<div class="a" style="top:443.47px;font-size:6.10px;color:#454545;left:476.00px;transform:scaleX(1.0100);transform-origin:0 0;-webkit-text-stroke:.09px #454545;">1055</div>
<div class="a" style="top:443.47px;font-size:6.10px;color:#454545;left:506.80px;transform:scaleX(1.0100);transform-origin:0 0;-webkit-text-stroke:.09px #454545;">Produto 1055</div>
<div class="a" style="top:443.47px;font-size:6.10px;color:#454545;left:571.30px;transform:scaleX(1.0100);transform-origin:0 0;-webkit-text-stroke:.09px #454545;">Laboratorio ...</div>
<div class="a" style="top:443.47px;font-size:6.10px;color:#454545;left:625.00px;transform:scaleX(1.0100);transform-origin:50% 0;-webkit-text-stroke:.09px #454545;">1</div>
<div class="a" style="top:443.47px;font-size:6.10px;color:#454545;left:641.54px;transform:scaleX(1.0100);transform-origin:100% 0;-webkit-text-stroke:.09px #454545;">R$ 37,37</div>
<div class="a" style="top:443.47px;font-size:6.10px;color:#454545;left:684.76px;transform:scaleX(1.0100);transform-origin:100% 0;-webkit-text-stroke:.09px #454545;">11,77%</div>
<div class="a" style="top:443.47px;font-size:6.10px;color:#454545;left:723.24px;transform:scaleX(1.0100);transform-origin:100% 0;-webkit-text-stroke:.09px #454545;">R$ 32,98</div>
<div class="a" style="top:443.47px;font-size:6.10px;color:#454545;left:758.64px;transform:scaleX(1.0100);transform-origin:100% 0;-webkit-text-stroke:.09px #454545;">R$ 24,95</div>
<div class="a" style="top:443.47px;font-size:6.10px;color:#454545;left:793.61px;transform:scaleX(1.0100);transform-origin:100% 0;-webkit-text-stroke:.09px #454545;">24,35%</div>
<div class="a" style="top:443.47px;font-size:6.10px;color:#454545;left:820.30px;transform:scaleX(1.0100);transform-origin:0 0;-webkit-text-stroke:.09px #454545;">Funcionario 275</div>
<div class="a" style="top:443.47px;font-size:6.10px;color:#454545;left:878.20px;transform:scaleX(1.0100);transform-origin:0 0;-webkit-text-stroke:.09px #454545;">Cliente 0</div>
<div class="a" style="top:451.47px;font-size:6.10px;color:#454545;left:407.80px;transform:scaleX(1.0100);transform-origin:0 0;-webkit-text-stroke:.09px #454545;">17/06/2025</div>
<div class="a" style="top:451.47px;font-size:6.10px;color:#454545;left:446.40px;transform:scaleX(1.0100);transform-origin:0 0;-webkit-text-stroke:.09px #454545;">309170...</div>
<div class="a" style="top:451.47px;font-size:6.10px;color:#454545;left:476.00px;transform:scaleX(1.0100);transform-origin:0 0;-webkit-text-stroke:.09px #454545;">1065</div>
<div class="a" style="top:451.47px;font-size:6.10px;color:#454545;left:506.80px;transform:scaleX(1.0100);transform-origin:0 0;-webkit-text-stroke:.09px #454545;">Produto 1065</div>
<div class="a" style="top:451.47px;font-size:6.10px;color:#454545;left:571.30px;transform:scaleX(1.0100);transform-origin:0 0;-webkit-text-stroke:.09px #454545;">Laboratorio ...</div>
<div class="a" style="top:451.47px;font-size:6.10px;color:#454545;left:625.00px;transform:scaleX(1.0100);transform-origin:50% 0;-webkit-text-stroke:.09px #454545;">1</div>
<div class="a" style="top:451.47px;font-size:6.10px;color:#454545;left:641.54px;transform:scaleX(1.0100);transform-origin:100% 0;-webkit-text-stroke:.09px #454545;">R$ 49,80</div>
<div class="a" style="top:451.47px;font-size:6.10px;color:#454545;left:684.31px;transform:scaleX(1.0100);transform-origin:100% 0;-webkit-text-stroke:.09px #454545;">37,23%</div>
<div class="a" style="top:451.47px;font-size:6.10px;color:#454545;left:723.24px;transform:scaleX(1.0100);transform-origin:100% 0;-webkit-text-stroke:.09px #454545;">R$ 31,26</div>
<div class="a" style="top:451.47px;font-size:6.10px;color:#454545;left:758.64px;transform:scaleX(1.0100);transform-origin:100% 0;-webkit-text-stroke:.09px #454545;">R$ 15,49</div>
<div class="a" style="top:451.47px;font-size:6.10px;color:#454545;left:793.61px;transform:scaleX(1.0100);transform-origin:100% 0;-webkit-text-stroke:.09px #454545;">50,45%</div>
<div class="a" style="top:451.47px;font-size:6.10px;color:#454545;left:820.30px;transform:scaleX(1.0100);transform-origin:0 0;-webkit-text-stroke:.09px #454545;">Funcionario 1011</div>
<div class="a" style="top:451.47px;font-size:6.10px;color:#454545;left:878.20px;transform:scaleX(1.0100);transform-origin:0 0;-webkit-text-stroke:.09px #454545;">Cliente 18466344</div>
<div class="a" style="left:404.00px;top:459.00px;width:532.50px;height:8.40px;background:#eeeeee;"></div>
<div class="a" style="top:459.97px;font-size:6.10px;color:#454545;left:407.80px;transform:scaleX(1.0100);transform-origin:0 0;-webkit-text-stroke:.09px #454545;">17/06/2025</div>
<div class="a" style="top:459.97px;font-size:6.10px;color:#454545;left:446.40px;transform:scaleX(1.0100);transform-origin:0 0;-webkit-text-stroke:.09px #454545;">310197...</div>
<div class="a" style="top:459.97px;font-size:6.10px;color:#454545;left:476.00px;transform:scaleX(1.0100);transform-origin:0 0;-webkit-text-stroke:.09px #454545;">1065</div>
<div class="a" style="top:459.97px;font-size:6.10px;color:#454545;left:506.80px;transform:scaleX(1.0100);transform-origin:0 0;-webkit-text-stroke:.09px #454545;">Produto 1065</div>
<div class="a" style="top:459.97px;font-size:6.10px;color:#454545;left:571.30px;transform:scaleX(1.0100);transform-origin:0 0;-webkit-text-stroke:.09px #454545;">Laboratorio ...</div>
<div class="a" style="top:459.97px;font-size:6.10px;color:#454545;left:625.00px;transform:scaleX(1.0100);transform-origin:50% 0;-webkit-text-stroke:.09px #454545;">1</div>
<div class="a" style="top:459.97px;font-size:6.10px;color:#454545;left:641.54px;transform:scaleX(1.0100);transform-origin:100% 0;-webkit-text-stroke:.09px #454545;">R$ 49,80</div>
<div class="a" style="top:459.97px;font-size:6.10px;color:#454545;left:684.31px;transform:scaleX(1.0100);transform-origin:100% 0;-webkit-text-stroke:.09px #454545;">37,23%</div>
<div class="a" style="top:459.97px;font-size:6.10px;color:#454545;left:723.24px;transform:scaleX(1.0100);transform-origin:100% 0;-webkit-text-stroke:.09px #454545;">R$ 31,26</div>
<div class="a" style="top:459.97px;font-size:6.10px;color:#454545;left:758.64px;transform:scaleX(1.0100);transform-origin:100% 0;-webkit-text-stroke:.09px #454545;">R$ 15,49</div>
<div class="a" style="top:459.97px;font-size:6.10px;color:#454545;left:793.61px;transform:scaleX(1.0100);transform-origin:100% 0;-webkit-text-stroke:.09px #454545;">50,45%</div>
<div class="a" style="top:459.97px;font-size:6.10px;color:#454545;left:820.30px;transform:scaleX(1.0100);transform-origin:0 0;-webkit-text-stroke:.09px #454545;">Funcionario 1011</div>
<div class="a" style="top:459.97px;font-size:6.10px;color:#454545;left:878.20px;transform:scaleX(1.0100);transform-origin:0 0;-webkit-text-stroke:.09px #454545;">Cliente 18466344</div>
<div class="a" style="top:468.17px;font-size:6.10px;color:#454545;left:407.80px;transform:scaleX(1.0100);transform-origin:0 0;-webkit-text-stroke:.09px #454545;">17/06/2025</div>
<div class="a" style="top:468.17px;font-size:6.10px;color:#454545;left:446.40px;transform:scaleX(1.0100);transform-origin:0 0;-webkit-text-stroke:.09px #454545;">309163...</div>
<div class="a" style="top:468.17px;font-size:6.10px;color:#454545;left:476.00px;transform:scaleX(1.0100);transform-origin:0 0;-webkit-text-stroke:.09px #454545;">10849</div>
<div class="a" style="top:468.17px;font-size:6.10px;color:#454545;left:506.80px;transform:scaleX(1.0100);transform-origin:0 0;-webkit-text-stroke:.09px #454545;">Produto 10849</div>
<div class="a" style="top:468.17px;font-size:6.10px;color:#454545;left:571.30px;transform:scaleX(1.0100);transform-origin:0 0;-webkit-text-stroke:.09px #454545;">Laboratorio ...</div>
<div class="a" style="top:468.17px;font-size:6.10px;color:#454545;left:625.00px;transform:scaleX(1.0100);transform-origin:50% 0;-webkit-text-stroke:.09px #454545;">1</div>
<div class="a" style="top:468.17px;font-size:6.10px;color:#454545;left:641.54px;transform:scaleX(1.0100);transform-origin:100% 0;-webkit-text-stroke:.09px #454545;">R$ 68,61</div>
<div class="a" style="top:468.17px;font-size:6.10px;color:#454545;left:684.31px;transform:scaleX(1.0100);transform-origin:100% 0;-webkit-text-stroke:.09px #454545;">19,98%</div>
<div class="a" style="top:468.17px;font-size:6.10px;color:#454545;left:723.24px;transform:scaleX(1.0100);transform-origin:100% 0;-webkit-text-stroke:.09px #454545;">R$ 54,89</div>
<div class="a" style="top:468.17px;font-size:6.10px;color:#454545;left:758.64px;transform:scaleX(1.0100);transform-origin:100% 0;-webkit-text-stroke:.09px #454545;">R$ 48,77</div>
<div class="a" style="top:468.17px;font-size:6.10px;color:#454545;left:794.06px;transform:scaleX(1.0100);transform-origin:100% 0;-webkit-text-stroke:.09px #454545;">11,15%</div>
<div class="a" style="top:468.17px;font-size:6.10px;color:#454545;left:820.30px;transform:scaleX(1.0100);transform-origin:0 0;-webkit-text-stroke:.09px #454545;">Funcionario 26</div>
<div class="a" style="top:468.17px;font-size:6.10px;color:#454545;left:878.20px;transform:scaleX(1.0100);transform-origin:0 0;-webkit-text-stroke:.09px #454545;">Cliente 18819</div>
<div class="a" style="left:404.00px;top:475.70px;width:532.50px;height:8.40px;background:#eeeeee;"></div>
<div class="a" style="top:476.67px;font-size:6.10px;color:#454545;left:407.80px;transform:scaleX(1.0100);transform-origin:0 0;-webkit-text-stroke:.09px #454545;">17/06/2025</div>
<div class="a" style="top:476.67px;font-size:6.10px;color:#454545;left:446.40px;transform:scaleX(1.0100);transform-origin:0 0;-webkit-text-stroke:.09px #454545;">310169...</div>
<div class="a" style="top:476.67px;font-size:6.10px;color:#454545;left:476.00px;transform:scaleX(1.0100);transform-origin:0 0;-webkit-text-stroke:.09px #454545;">10849</div>
<div class="a" style="top:476.67px;font-size:6.10px;color:#454545;left:506.80px;transform:scaleX(1.0100);transform-origin:0 0;-webkit-text-stroke:.09px #454545;">Produto 10849</div>
<div class="a" style="top:476.67px;font-size:6.10px;color:#454545;left:571.30px;transform:scaleX(1.0100);transform-origin:0 0;-webkit-text-stroke:.09px #454545;">Laboratorio ...</div>
<div class="a" style="top:476.67px;font-size:6.10px;color:#454545;left:625.00px;transform:scaleX(1.0100);transform-origin:50% 0;-webkit-text-stroke:.09px #454545;">1</div>
<div class="a" style="top:476.67px;font-size:6.10px;color:#454545;left:641.54px;transform:scaleX(1.0100);transform-origin:100% 0;-webkit-text-stroke:.09px #454545;">R$ 68,61</div>
<div class="a" style="top:476.67px;font-size:6.10px;color:#454545;left:684.31px;transform:scaleX(1.0100);transform-origin:100% 0;-webkit-text-stroke:.09px #454545;">19,98%</div>
<div class="a" style="top:476.67px;font-size:6.10px;color:#454545;left:723.24px;transform:scaleX(1.0100);transform-origin:100% 0;-webkit-text-stroke:.09px #454545;">R$ 54,89</div>
<div class="a" style="top:476.67px;font-size:6.10px;color:#454545;left:758.64px;transform:scaleX(1.0100);transform-origin:100% 0;-webkit-text-stroke:.09px #454545;">R$ 48,77</div>
<div class="a" style="top:476.67px;font-size:6.10px;color:#454545;left:794.06px;transform:scaleX(1.0100);transform-origin:100% 0;-webkit-text-stroke:.09px #454545;">11,15%</div>
<div class="a" style="top:476.67px;font-size:6.10px;color:#454545;left:820.30px;transform:scaleX(1.0100);transform-origin:0 0;-webkit-text-stroke:.09px #454545;">Funcionario 26</div>
<div class="a" style="top:476.67px;font-size:6.10px;color:#454545;left:878.20px;transform:scaleX(1.0100);transform-origin:0 0;-webkit-text-stroke:.09px #454545;">Cliente 18819</div>
<div class="a" style="top:485.07px;font-size:6.10px;color:#454545;left:407.80px;transform:scaleX(1.0100);transform-origin:0 0;-webkit-text-stroke:.09px #454545;">17/06/2025</div>
<div class="a" style="top:485.07px;font-size:6.10px;color:#454545;left:446.40px;transform:scaleX(1.0100);transform-origin:0 0;-webkit-text-stroke:.09px #454545;">309143...</div>
<div class="a" style="top:485.07px;font-size:6.10px;color:#454545;left:476.00px;transform:scaleX(1.0100);transform-origin:0 0;-webkit-text-stroke:.09px #454545;">1092</div>
<div class="a" style="top:485.07px;font-size:6.10px;color:#454545;left:506.80px;transform:scaleX(1.0100);transform-origin:0 0;-webkit-text-stroke:.09px #454545;">Produto 1092</div>
<div class="a" style="top:485.07px;font-size:6.10px;color:#454545;left:571.30px;transform:scaleX(1.0100);transform-origin:0 0;-webkit-text-stroke:.09px #454545;">Laboratorio ...</div>
<div class="a" style="top:485.07px;font-size:6.10px;color:#454545;left:625.00px;transform:scaleX(1.0100);transform-origin:50% 0;-webkit-text-stroke:.09px #454545;">1</div>
<div class="a" style="top:485.07px;font-size:6.10px;color:#454545;left:641.54px;transform:scaleX(1.0100);transform-origin:100% 0;-webkit-text-stroke:.09px #454545;">R$ 30,72</div>
<div class="a" style="top:485.07px;font-size:6.10px;color:#454545;left:684.31px;transform:scaleX(1.0100);transform-origin:100% 0;-webkit-text-stroke:.09px #454545;">26,17%</div>
<div class="a" style="top:485.07px;font-size:6.10px;color:#454545;left:723.24px;transform:scaleX(1.0100);transform-origin:100% 0;-webkit-text-stroke:.09px #454545;">R$ 22,68</div>
<div class="a" style="top:485.07px;font-size:6.10px;color:#454545;left:762.03px;transform:scaleX(1.0100);transform-origin:100% 0;-webkit-text-stroke:.09px #454545;">R$ 7,59</div>
<div class="a" style="top:485.07px;font-size:6.10px;color:#454545;left:793.61px;transform:scaleX(1.0100);transform-origin:100% 0;-webkit-text-stroke:.09px #454545;">66,53%</div>
<div class="a" style="top:485.07px;font-size:6.10px;color:#454545;left:820.30px;transform:scaleX(1.0100);transform-origin:0 0;-webkit-text-stroke:.09px #454545;">Funcionario 275</div>
<div class="a" style="top:485.07px;font-size:6.10px;color:#454545;left:878.20px;transform:scaleX(1.0100);transform-origin:0 0;-webkit-text-stroke:.09px #454545;">Cliente 18469985...</div>
<div class="a" style="left:207.50px;top:495.00px;width:799.00px;height:14.00px;background:#f2f2f2;"></div>
<div class="a" style="left:847.30px;top:503.70px;width:3.40px;height:0.90px;background:#555;"></div>
<div class="a" style="left:854.00px;top:503.70px;width:74.60px;height:0.80px;background:#9a9a9a;"></div>
<div class="a" style="left:878.40px;top:500.30px;width:2.40px;height:7.60px;background:#333;border-radius:1px;"></div>
<div class="a" style="left:892.00px;top:502.20px;width:0.80px;height:3.60px;background:#9a9a9a;"></div>
<div class="a" style="left:934.20px;top:503.70px;width:5.00px;height:0.90px;background:#555;"></div>
<div class="a" style="left:936.25px;top:501.60px;width:0.90px;height:5.00px;background:#555;"></div>
<div class="a" style="top:499.96px;font-size:8.00px;color:#666;left:949.40px;transform:scaleX(1.0929);transform-origin:0 0;">70%</div>
<svg class="a" style="left:986px;top:500px" width="10" height="8" viewBox="0 0 10 8" fill="none" stroke="#555" stroke-width=".9"><rect x=".6" y=".6" width="8.8" height="6.8" rx=".8"/><path d="M2.5 3V2.3h1.2M7.5 3V2.3H6.3M2.5 5v.7h1.2M7.5 5v.7H6.3" stroke-width=".7"/></svg>
</div></body></html>
